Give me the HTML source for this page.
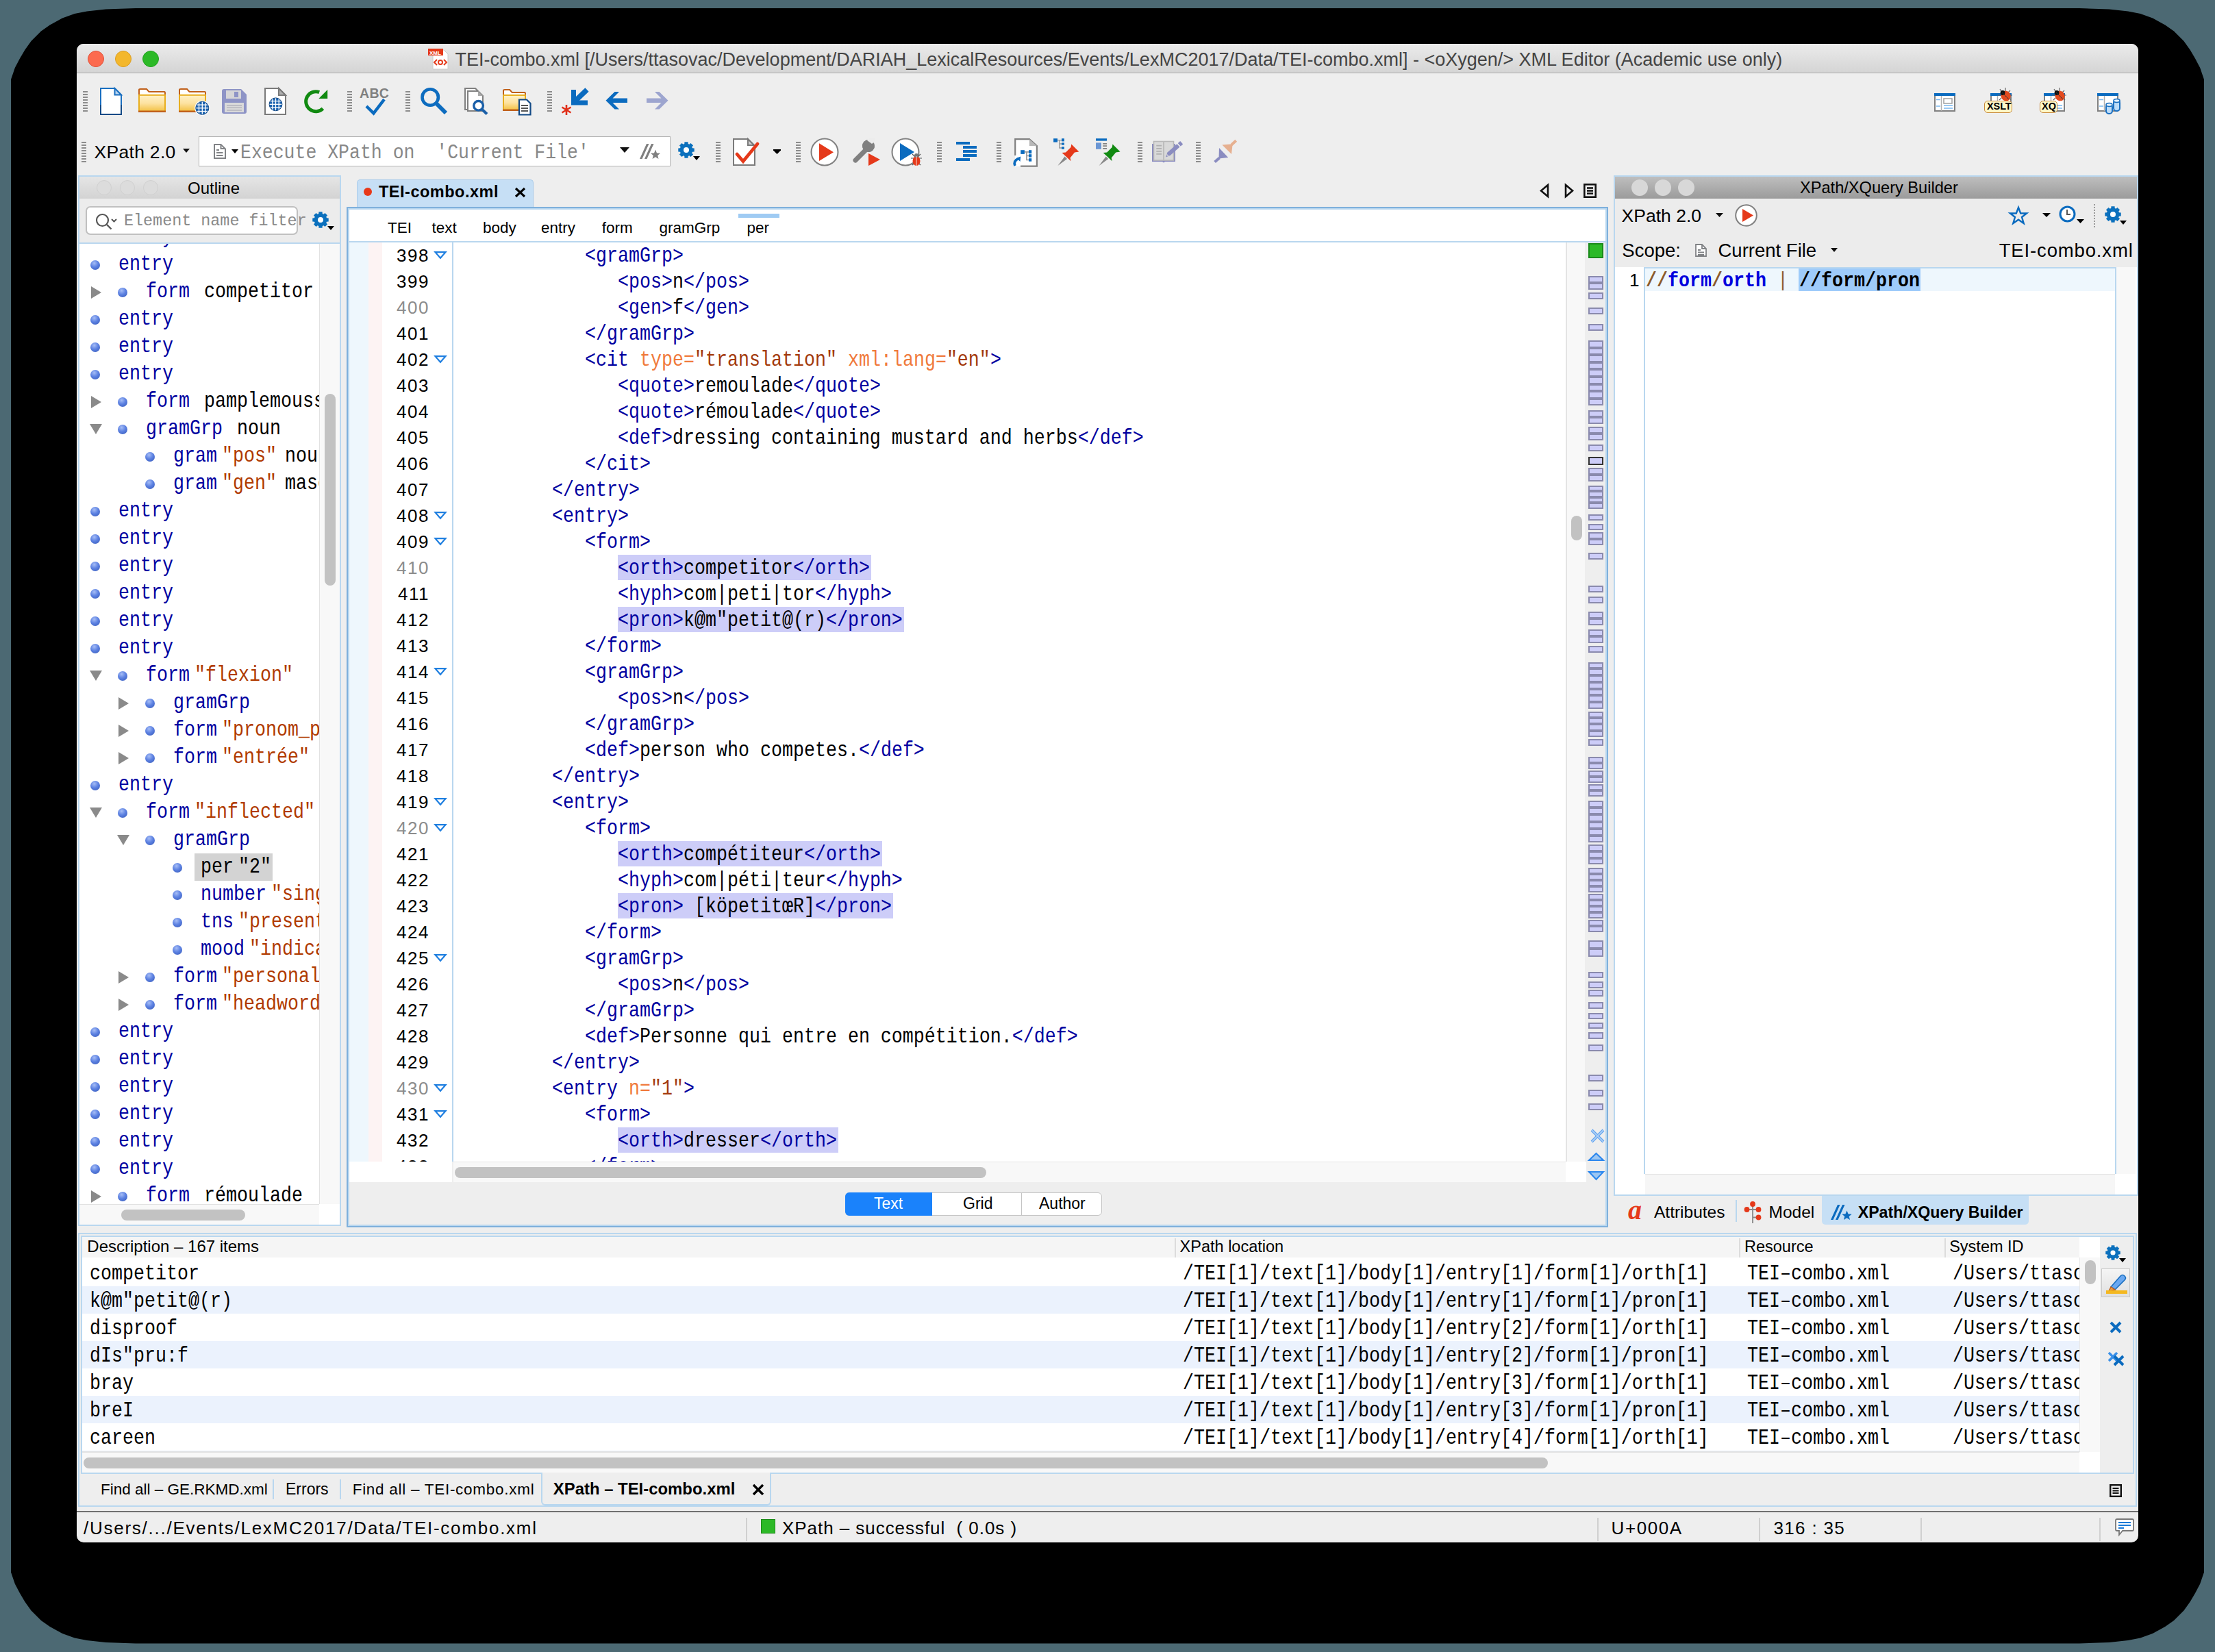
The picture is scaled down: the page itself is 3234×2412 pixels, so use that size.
<!DOCTYPE html><html><head><meta charset="utf-8"><style>
html,body{margin:0;padding:0}
body{width:3234px;height:2412px;background:#4c6973;position:relative;overflow:hidden;font-family:"Liberation Sans",sans-serif}
.a{position:absolute}
.ts{font-family:"Liberation Sans",sans-serif;white-space:pre;line-height:normal}
.tm{font-family:"Liberation Mono",monospace;white-space:pre;line-height:normal}
svg{position:absolute;overflow:visible}
.grip{position:absolute;width:7px;background:repeating-linear-gradient(#8c8c8c 0 2px,transparent 2px 4px)}
</style></head><body>
<svg style="left:0;top:0" width="3234" height="2412" viewBox="0 0 3234 2412"><path d="M16.0 116.0 L21.8 99.0 L28.9 85.5 L36.4 72.7 L45.5 60.0 L60.0 45.5 L72.8 36.4 L91.0 26.4 L109.0 20.0 L127.0 16.4 L154.5 13.6 L198.0 12.0 L3036.0 12.0 L3079.5 13.6 L3107.0 16.4 L3125.0 20.0 L3143.0 26.4 L3161.2 36.4 L3174.0 45.5 L3188.5 60.0 L3197.6 72.7 L3205.1 85.5 L3212.2 99.0 L3218.0 116.0 L3218.0 2295.5 L3212.2 2312.5 L3205.1 2326.0 L3197.6 2338.8 L3188.5 2351.5 L3174.0 2366.0 L3161.2 2375.1 L3143.0 2385.1 L3125.0 2391.5 L3107.0 2395.1 L3079.5 2397.9 L3036.0 2399.5 L198.0 2399.5 L154.5 2397.9 L127.0 2395.1 L109.0 2391.5 L91.0 2385.1 L72.8 2375.1 L60.0 2366.0 L45.5 2351.5 L36.4 2338.8 L28.9 2326.0 L21.8 2312.5 L16.0 2295.5Z" fill="#000"/></svg>
<div class="a" style="left:112px;top:64px;width:3010px;height:2188px;background:#eeeeee;border-radius:10px"></div>
<div class="a" style="left:112px;top:64px;width:3010px;height:43px;background:linear-gradient(#ebebeb,#d4d4d4);border-radius:10px 10px 0 0"></div>
<div class="a" style="left:112px;top:106px;width:3010px;height:1px;background:#a8a8a8"></div>
<div class="a" style="left:128px;top:74px;width:24px;height:24px;background:#fc6a4f;border-radius:50%;box-sizing:border-box;border:1px solid #e0533c"></div>
<div class="a" style="left:168px;top:74px;width:24px;height:24px;background:#f3b72c;border-radius:50%;box-sizing:border-box;border:1px solid #dc9d20"></div>
<div class="a" style="left:208px;top:74px;width:24px;height:24px;background:#2cb927;border-radius:50%;box-sizing:border-box;border:1px solid #22a21f"></div>
<div class="a ts" style="left:664.5px;top:72.36px;font-size:27px;color:#444;font-weight:normal;">TEI-combo.xml [/Users/ttasovac/Development/DARIAH_LexicalResources/Events/LexMC2017/Data/TEI-combo.xml] - &lt;oXygen/&gt; XML Editor (Academic use only)</div>
<div class="grip" style="left:121px;top:133px;height:30px"></div>
<div class="grip" style="left:507px;top:133px;height:30px"></div>
<div class="grip" style="left:592px;top:133px;height:30px"></div>
<div class="grip" style="left:799px;top:133px;height:30px"></div>
<div class="grip" style="left:119px;top:207px;height:30px"></div>
<div class="grip" style="left:1045px;top:207px;height:30px"></div>
<div class="grip" style="left:1162px;top:207px;height:30px"></div>
<div class="grip" style="left:1368px;top:207px;height:30px"></div>
<div class="grip" style="left:1455px;top:207px;height:30px"></div>
<div class="grip" style="left:1661px;top:207px;height:30px"></div>
<div class="grip" style="left:1746px;top:207px;height:30px"></div>
<div class="a ts" style="left:137.5px;top:206.62px;font-size:26.5px;color:#000;font-weight:normal;letter-spacing:0.3px">XPath 2.0</div>
<svg style="left:267px;top:217px;" width="10" height="6" viewBox="0 0 10 6"><path d="M0 0H10L5 6Z" fill="#111"/></svg>
<div class="a" style="left:290px;top:199px;width:689px;height:44px;background:#fff;box-sizing:border-box;border:1px solid #b4b4b4"></div>
<div class="a tm" style="left:351px;top:208.54px;font-size:26.5px;transform:scaleY(1.1);transform-origin:0 22.06px;"><span style="color:#888">Execute XPath on  'Current File'</span></div>
<svg style="left:905px;top:215px;" width="14" height="8" viewBox="0 0 14 8"><path d="M0 0H14L7 8Z" fill="#111"/></svg>
<div class="a" style="left:114px;top:256px;width:384px;height:1534px;box-sizing:border-box;border:2px solid #b9d7ef;background:#ececec"></div>
<div class="a" style="left:116px;top:258px;width:380px;height:32px;background:linear-gradient(#e5e5e5,#d3d3d3)"></div>
<div class="a" style="left:140.5px;top:263px;width:22px;height:22px;border-radius:50%;background:#dcdcdc;box-sizing:border-box;border:1px solid #d0d0d0"></div>
<div class="a" style="left:175px;top:263px;width:22px;height:22px;border-radius:50%;background:#dcdcdc;box-sizing:border-box;border:1px solid #d0d0d0"></div>
<div class="a" style="left:209px;top:263px;width:22px;height:22px;border-radius:50%;background:#dcdcdc;box-sizing:border-box;border:1px solid #d0d0d0"></div>
<div class="a ts" style="left:274px;top:260.78px;font-size:24px;color:#000;font-weight:normal;">Outline</div>
<div class="a" style="left:125px;top:301px;width:310px;height:42px;background:#fff;box-sizing:border-box;border:2px solid #c0c0c0;border-radius:7px"></div>
<div class="a tm" style="left:181px;top:310.32px;font-size:23.4px;color:#8a8a8a;font-weight:normal;">Element name filter</div>
<div class="a" style="left:116px;top:354px;width:380px;height:2px;background:#b9d7ef"></div>
<div class="a" style="left:116px;top:356px;width:350px;height:1402px;background:#fff"></div>
<div class="a" style="left:116px;top:356px;width:350px;height:1402px;overflow:hidden">
<div class="a" style="left:16px;top:24px;width:14px;height:14px;border-radius:50%;background:radial-gradient(circle at 40% 30%,#a6bdf6 0,#5d82e2 45%,#3558b8 100%)"></div>
<div class="a tm" style="left:57px;top:16.20px;font-size:26.67px;transform:scaleY(1.17);transform-origin:0 22.20px;"><span style="color:#0000a0">entry</span></div>
<svg style="left:16.5px;top:62px;" width="15" height="18" viewBox="0 0 15 18"><path d="M0 0L15 9L0 18Z" fill="#8a8a8a"/></svg>
<div class="a" style="left:56px;top:64px;width:14px;height:14px;border-radius:50%;background:radial-gradient(circle at 40% 30%,#a6bdf6 0,#5d82e2 45%,#3558b8 100%)"></div>
<div class="a tm" style="left:97px;top:56.20px;font-size:26.67px;transform:scaleY(1.17);transform-origin:0 22.20px;"><span style="color:#0000a0">form</span><span style="margin-left:21px"></span><span style="color:#000">competitor</span></div>
<div class="a" style="left:16px;top:104px;width:14px;height:14px;border-radius:50%;background:radial-gradient(circle at 40% 30%,#a6bdf6 0,#5d82e2 45%,#3558b8 100%)"></div>
<div class="a tm" style="left:57px;top:96.20px;font-size:26.67px;transform:scaleY(1.17);transform-origin:0 22.20px;"><span style="color:#0000a0">entry</span></div>
<div class="a" style="left:16px;top:144px;width:14px;height:14px;border-radius:50%;background:radial-gradient(circle at 40% 30%,#a6bdf6 0,#5d82e2 45%,#3558b8 100%)"></div>
<div class="a tm" style="left:57px;top:136.20px;font-size:26.67px;transform:scaleY(1.17);transform-origin:0 22.20px;"><span style="color:#0000a0">entry</span></div>
<div class="a" style="left:16px;top:184px;width:14px;height:14px;border-radius:50%;background:radial-gradient(circle at 40% 30%,#a6bdf6 0,#5d82e2 45%,#3558b8 100%)"></div>
<div class="a tm" style="left:57px;top:176.20px;font-size:26.67px;transform:scaleY(1.17);transform-origin:0 22.20px;"><span style="color:#0000a0">entry</span></div>
<svg style="left:16.5px;top:222px;" width="15" height="18" viewBox="0 0 15 18"><path d="M0 0L15 9L0 18Z" fill="#8a8a8a"/></svg>
<div class="a" style="left:56px;top:224px;width:14px;height:14px;border-radius:50%;background:radial-gradient(circle at 40% 30%,#a6bdf6 0,#5d82e2 45%,#3558b8 100%)"></div>
<div class="a tm" style="left:97px;top:216.20px;font-size:26.67px;transform:scaleY(1.17);transform-origin:0 22.20px;"><span style="color:#0000a0">form</span><span style="margin-left:21px"></span><span style="color:#000">pamplemousse</span></div>
<svg style="left:15px;top:263px;" width="18" height="15" viewBox="0 0 18 15"><path d="M0 0H18L9 15Z" fill="#8a8a8a"/></svg>
<div class="a" style="left:56px;top:264px;width:14px;height:14px;border-radius:50%;background:radial-gradient(circle at 40% 30%,#a6bdf6 0,#5d82e2 45%,#3558b8 100%)"></div>
<div class="a tm" style="left:97px;top:256.20px;font-size:26.67px;transform:scaleY(1.17);transform-origin:0 22.20px;"><span style="color:#0000a0">gramGrp</span><span style="margin-left:21px"></span><span style="color:#000">noun</span></div>
<div class="a" style="left:96px;top:304px;width:14px;height:14px;border-radius:50%;background:radial-gradient(circle at 40% 30%,#a6bdf6 0,#5d82e2 45%,#3558b8 100%)"></div>
<div class="a tm" style="left:137px;top:296.20px;font-size:26.67px;transform:scaleY(1.17);transform-origin:0 22.20px;"><span style="color:#0000a0">gram</span><span style="margin-left:7px"></span><span style="color:#b03a00">"pos"</span><span style="margin-left:12px"></span><span style="color:#000">noun</span></div>
<div class="a" style="left:96px;top:344px;width:14px;height:14px;border-radius:50%;background:radial-gradient(circle at 40% 30%,#a6bdf6 0,#5d82e2 45%,#3558b8 100%)"></div>
<div class="a tm" style="left:137px;top:336.20px;font-size:26.67px;transform:scaleY(1.17);transform-origin:0 22.20px;"><span style="color:#0000a0">gram</span><span style="margin-left:7px"></span><span style="color:#b03a00">"gen"</span><span style="margin-left:12px"></span><span style="color:#000">masc</span></div>
<div class="a" style="left:16px;top:384px;width:14px;height:14px;border-radius:50%;background:radial-gradient(circle at 40% 30%,#a6bdf6 0,#5d82e2 45%,#3558b8 100%)"></div>
<div class="a tm" style="left:57px;top:376.20px;font-size:26.67px;transform:scaleY(1.17);transform-origin:0 22.20px;"><span style="color:#0000a0">entry</span></div>
<div class="a" style="left:16px;top:424px;width:14px;height:14px;border-radius:50%;background:radial-gradient(circle at 40% 30%,#a6bdf6 0,#5d82e2 45%,#3558b8 100%)"></div>
<div class="a tm" style="left:57px;top:416.20px;font-size:26.67px;transform:scaleY(1.17);transform-origin:0 22.20px;"><span style="color:#0000a0">entry</span></div>
<div class="a" style="left:16px;top:464px;width:14px;height:14px;border-radius:50%;background:radial-gradient(circle at 40% 30%,#a6bdf6 0,#5d82e2 45%,#3558b8 100%)"></div>
<div class="a tm" style="left:57px;top:456.20px;font-size:26.67px;transform:scaleY(1.17);transform-origin:0 22.20px;"><span style="color:#0000a0">entry</span></div>
<div class="a" style="left:16px;top:504px;width:14px;height:14px;border-radius:50%;background:radial-gradient(circle at 40% 30%,#a6bdf6 0,#5d82e2 45%,#3558b8 100%)"></div>
<div class="a tm" style="left:57px;top:496.20px;font-size:26.67px;transform:scaleY(1.17);transform-origin:0 22.20px;"><span style="color:#0000a0">entry</span></div>
<div class="a" style="left:16px;top:544px;width:14px;height:14px;border-radius:50%;background:radial-gradient(circle at 40% 30%,#a6bdf6 0,#5d82e2 45%,#3558b8 100%)"></div>
<div class="a tm" style="left:57px;top:536.20px;font-size:26.67px;transform:scaleY(1.17);transform-origin:0 22.20px;"><span style="color:#0000a0">entry</span></div>
<div class="a" style="left:16px;top:584px;width:14px;height:14px;border-radius:50%;background:radial-gradient(circle at 40% 30%,#a6bdf6 0,#5d82e2 45%,#3558b8 100%)"></div>
<div class="a tm" style="left:57px;top:576.20px;font-size:26.67px;transform:scaleY(1.17);transform-origin:0 22.20px;"><span style="color:#0000a0">entry</span></div>
<svg style="left:15px;top:623px;" width="18" height="15" viewBox="0 0 18 15"><path d="M0 0H18L9 15Z" fill="#8a8a8a"/></svg>
<div class="a" style="left:56px;top:624px;width:14px;height:14px;border-radius:50%;background:radial-gradient(circle at 40% 30%,#a6bdf6 0,#5d82e2 45%,#3558b8 100%)"></div>
<div class="a tm" style="left:97px;top:616.20px;font-size:26.67px;transform:scaleY(1.17);transform-origin:0 22.20px;"><span style="color:#0000a0">form</span><span style="margin-left:7px"></span><span style="color:#b03a00">"flexion"</span></div>
<svg style="left:56.5px;top:662px;" width="15" height="18" viewBox="0 0 15 18"><path d="M0 0L15 9L0 18Z" fill="#8a8a8a"/></svg>
<div class="a" style="left:96px;top:664px;width:14px;height:14px;border-radius:50%;background:radial-gradient(circle at 40% 30%,#a6bdf6 0,#5d82e2 45%,#3558b8 100%)"></div>
<div class="a tm" style="left:137px;top:656.20px;font-size:26.67px;transform:scaleY(1.17);transform-origin:0 22.20px;"><span style="color:#0000a0">gramGrp</span></div>
<svg style="left:56.5px;top:702px;" width="15" height="18" viewBox="0 0 15 18"><path d="M0 0L15 9L0 18Z" fill="#8a8a8a"/></svg>
<div class="a" style="left:96px;top:704px;width:14px;height:14px;border-radius:50%;background:radial-gradient(circle at 40% 30%,#a6bdf6 0,#5d82e2 45%,#3558b8 100%)"></div>
<div class="a tm" style="left:137px;top:696.20px;font-size:26.67px;transform:scaleY(1.17);transform-origin:0 22.20px;"><span style="color:#0000a0">form</span><span style="margin-left:7px"></span><span style="color:#b03a00">"pronom_pers"</span></div>
<svg style="left:56.5px;top:742px;" width="15" height="18" viewBox="0 0 15 18"><path d="M0 0L15 9L0 18Z" fill="#8a8a8a"/></svg>
<div class="a" style="left:96px;top:744px;width:14px;height:14px;border-radius:50%;background:radial-gradient(circle at 40% 30%,#a6bdf6 0,#5d82e2 45%,#3558b8 100%)"></div>
<div class="a tm" style="left:137px;top:736.20px;font-size:26.67px;transform:scaleY(1.17);transform-origin:0 22.20px;"><span style="color:#0000a0">form</span><span style="margin-left:7px"></span><span style="color:#b03a00">"entrée"</span></div>
<div class="a" style="left:16px;top:784px;width:14px;height:14px;border-radius:50%;background:radial-gradient(circle at 40% 30%,#a6bdf6 0,#5d82e2 45%,#3558b8 100%)"></div>
<div class="a tm" style="left:57px;top:776.20px;font-size:26.67px;transform:scaleY(1.17);transform-origin:0 22.20px;"><span style="color:#0000a0">entry</span></div>
<svg style="left:15px;top:823px;" width="18" height="15" viewBox="0 0 18 15"><path d="M0 0H18L9 15Z" fill="#8a8a8a"/></svg>
<div class="a" style="left:56px;top:824px;width:14px;height:14px;border-radius:50%;background:radial-gradient(circle at 40% 30%,#a6bdf6 0,#5d82e2 45%,#3558b8 100%)"></div>
<div class="a tm" style="left:97px;top:816.20px;font-size:26.67px;transform:scaleY(1.17);transform-origin:0 22.20px;"><span style="color:#0000a0">form</span><span style="margin-left:7px"></span><span style="color:#b03a00">"inflected"</span></div>
<svg style="left:55px;top:863px;" width="18" height="15" viewBox="0 0 18 15"><path d="M0 0H18L9 15Z" fill="#8a8a8a"/></svg>
<div class="a" style="left:96px;top:864px;width:14px;height:14px;border-radius:50%;background:radial-gradient(circle at 40% 30%,#a6bdf6 0,#5d82e2 45%,#3558b8 100%)"></div>
<div class="a tm" style="left:137px;top:856.20px;font-size:26.67px;transform:scaleY(1.17);transform-origin:0 22.20px;"><span style="color:#0000a0">gramGrp</span></div>
<div class="a" style="left:136px;top:904px;width:14px;height:14px;border-radius:50%;background:radial-gradient(circle at 40% 30%,#a6bdf6 0,#5d82e2 45%,#3558b8 100%)"></div>
<div class="a" style="left:168px;top:890px;width:114px;height:40px;background:#d3d3d3"></div>
<div class="a tm" style="left:177px;top:896.20px;font-size:26.67px;transform:scaleY(1.17);transform-origin:0 22.20px;"><span style="color:#000">per</span><span style="margin-left:7px"></span><span style="color:#000">"2"</span></div>
<div class="a" style="left:136px;top:944px;width:14px;height:14px;border-radius:50%;background:radial-gradient(circle at 40% 30%,#a6bdf6 0,#5d82e2 45%,#3558b8 100%)"></div>
<div class="a tm" style="left:177px;top:936.20px;font-size:26.67px;transform:scaleY(1.17);transform-origin:0 22.20px;"><span style="color:#0000a0">number</span><span style="margin-left:7px"></span><span style="color:#b03a00">"singular"</span></div>
<div class="a" style="left:136px;top:984px;width:14px;height:14px;border-radius:50%;background:radial-gradient(circle at 40% 30%,#a6bdf6 0,#5d82e2 45%,#3558b8 100%)"></div>
<div class="a tm" style="left:177px;top:976.20px;font-size:26.67px;transform:scaleY(1.17);transform-origin:0 22.20px;"><span style="color:#0000a0">tns</span><span style="margin-left:7px"></span><span style="color:#b03a00">"present"</span></div>
<div class="a" style="left:136px;top:1024px;width:14px;height:14px;border-radius:50%;background:radial-gradient(circle at 40% 30%,#a6bdf6 0,#5d82e2 45%,#3558b8 100%)"></div>
<div class="a tm" style="left:177px;top:1016.20px;font-size:26.67px;transform:scaleY(1.17);transform-origin:0 22.20px;"><span style="color:#0000a0">mood</span><span style="margin-left:7px"></span><span style="color:#b03a00">"indicative"</span></div>
<svg style="left:56.5px;top:1062px;" width="15" height="18" viewBox="0 0 15 18"><path d="M0 0L15 9L0 18Z" fill="#8a8a8a"/></svg>
<div class="a" style="left:96px;top:1064px;width:14px;height:14px;border-radius:50%;background:radial-gradient(circle at 40% 30%,#a6bdf6 0,#5d82e2 45%,#3558b8 100%)"></div>
<div class="a tm" style="left:137px;top:1056.20px;font-size:26.67px;transform:scaleY(1.17);transform-origin:0 22.20px;"><span style="color:#0000a0">form</span><span style="margin-left:7px"></span><span style="color:#b03a00">"personal"</span></div>
<svg style="left:56.5px;top:1102px;" width="15" height="18" viewBox="0 0 15 18"><path d="M0 0L15 9L0 18Z" fill="#8a8a8a"/></svg>
<div class="a" style="left:96px;top:1104px;width:14px;height:14px;border-radius:50%;background:radial-gradient(circle at 40% 30%,#a6bdf6 0,#5d82e2 45%,#3558b8 100%)"></div>
<div class="a tm" style="left:137px;top:1096.20px;font-size:26.67px;transform:scaleY(1.17);transform-origin:0 22.20px;"><span style="color:#0000a0">form</span><span style="margin-left:7px"></span><span style="color:#b03a00">"headword"</span></div>
<div class="a" style="left:16px;top:1144px;width:14px;height:14px;border-radius:50%;background:radial-gradient(circle at 40% 30%,#a6bdf6 0,#5d82e2 45%,#3558b8 100%)"></div>
<div class="a tm" style="left:57px;top:1136.20px;font-size:26.67px;transform:scaleY(1.17);transform-origin:0 22.20px;"><span style="color:#0000a0">entry</span></div>
<div class="a" style="left:16px;top:1184px;width:14px;height:14px;border-radius:50%;background:radial-gradient(circle at 40% 30%,#a6bdf6 0,#5d82e2 45%,#3558b8 100%)"></div>
<div class="a tm" style="left:57px;top:1176.20px;font-size:26.67px;transform:scaleY(1.17);transform-origin:0 22.20px;"><span style="color:#0000a0">entry</span></div>
<div class="a" style="left:16px;top:1224px;width:14px;height:14px;border-radius:50%;background:radial-gradient(circle at 40% 30%,#a6bdf6 0,#5d82e2 45%,#3558b8 100%)"></div>
<div class="a tm" style="left:57px;top:1216.20px;font-size:26.67px;transform:scaleY(1.17);transform-origin:0 22.20px;"><span style="color:#0000a0">entry</span></div>
<div class="a" style="left:16px;top:1264px;width:14px;height:14px;border-radius:50%;background:radial-gradient(circle at 40% 30%,#a6bdf6 0,#5d82e2 45%,#3558b8 100%)"></div>
<div class="a tm" style="left:57px;top:1256.20px;font-size:26.67px;transform:scaleY(1.17);transform-origin:0 22.20px;"><span style="color:#0000a0">entry</span></div>
<div class="a" style="left:16px;top:1304px;width:14px;height:14px;border-radius:50%;background:radial-gradient(circle at 40% 30%,#a6bdf6 0,#5d82e2 45%,#3558b8 100%)"></div>
<div class="a tm" style="left:57px;top:1296.20px;font-size:26.67px;transform:scaleY(1.17);transform-origin:0 22.20px;"><span style="color:#0000a0">entry</span></div>
<div class="a" style="left:16px;top:1344px;width:14px;height:14px;border-radius:50%;background:radial-gradient(circle at 40% 30%,#a6bdf6 0,#5d82e2 45%,#3558b8 100%)"></div>
<div class="a tm" style="left:57px;top:1336.20px;font-size:26.67px;transform:scaleY(1.17);transform-origin:0 22.20px;"><span style="color:#0000a0">entry</span></div>
<svg style="left:16.5px;top:1382px;" width="15" height="18" viewBox="0 0 15 18"><path d="M0 0L15 9L0 18Z" fill="#8a8a8a"/></svg>
<div class="a" style="left:56px;top:1384px;width:14px;height:14px;border-radius:50%;background:radial-gradient(circle at 40% 30%,#a6bdf6 0,#5d82e2 45%,#3558b8 100%)"></div>
<div class="a tm" style="left:97px;top:1376.20px;font-size:26.67px;transform:scaleY(1.17);transform-origin:0 22.20px;"><span style="color:#0000a0">form</span><span style="margin-left:21px"></span><span style="color:#000">rémoulade</span></div>
<div class="a tm" style="left:57px;top:-23.80px;font-size:26.67px;transform:scaleY(1.17);transform-origin:0 22.20px;"><span style="color:#0000a0">entry</span></div>
</div>
<div class="a" style="left:466px;top:356px;width:30px;height:1402px;background:#f8f8f8;box-sizing:border-box;border-left:1px solid #e2e2e2"></div>
<div class="a" style="left:474px;top:575px;width:16px;height:280px;background:#c2c2c2;border-radius:8px"></div>
<div class="a" style="left:116px;top:1758px;width:350px;height:30px;background:#f8f8f8;box-sizing:border-box;border-top:1px solid #e2e2e2"></div>
<div class="a" style="left:177px;top:1766px;width:181px;height:16px;background:#c2c2c2;border-radius:8px"></div>
<div class="a" style="left:466px;top:1758px;width:30px;height:30px;background:#fff"></div>
<div class="a" style="left:521px;top:262px;width:258px;height:42px;background:#c6dff5;box-sizing:border-box;border:1px solid #aacbea;border-bottom:none;border-radius:5px 5px 0 0"></div>
<div class="a" style="left:531px;top:274px;width:12px;height:12px;background:#e8391a;border-radius:50%"></div>
<div class="a ts" style="left:553px;top:267.33px;font-size:23.5px;color:#000;font-weight:bold;letter-spacing:0.5px">TEI-combo.xml</div>
<svg style="left:751px;top:273px;" width="17" height="16" viewBox="0 0 17 16"><path d="M2 2L15 14M15 2L2 14" stroke="#000" stroke-width="3.2"/></svg>
<div class="a" style="left:506px;top:302px;width:1842px;height:1490px;box-sizing:border-box;border:2px solid #7fb0dc;background:#eeeeee"></div>
<div class="a" style="left:508px;top:304px;width:1838px;height:1486px;box-sizing:border-box;border:2px solid #b9d7ef"></div>
<div class="a" style="left:510px;top:306px;width:1834px;height:46px;background:#fff"></div>
<div class="a" style="left:510px;top:352px;width:1834px;height:2px;background:#b9d7ef"></div>
<div class="a" style="left:510px;top:354px;width:28px;height:1342px;background:#eef7fd"></div>
<div class="a" style="left:538px;top:354px;width:20px;height:1342px;background:#fdf3f3"></div>
<div class="a" style="left:558px;top:354px;width:102px;height:1342px;background:#fff"></div>
<div class="a" style="left:660px;top:354px;width:2px;height:1342px;background:#b9d7ef"></div>
<div class="a" style="left:662px;top:354px;width:1624px;height:1342px;background:#fff"></div>
<div class="a" style="left:2286px;top:354px;width:28px;height:1342px;background:#f8f8f8;box-sizing:border-box;border-left:2px solid #e4e4e4"></div>
<div class="a" style="left:2294px;top:753px;width:16px;height:36px;background:#c2c2c2;border-radius:8px"></div>
<div class="a" style="left:2314px;top:354px;width:30px;height:1372px;background:#eeeeee"></div>
<div class="a" style="left:510px;top:1696px;width:150px;height:30px;background:#fff"></div>
<div class="a" style="left:662px;top:1696px;width:1624px;height:30px;background:#f8f8f8;box-sizing:border-box;border-top:1px solid #e4e4e4"></div>
<div class="a" style="left:664px;top:1704px;width:776px;height:16px;background:#c2c2c2;border-radius:8px"></div>
<div class="a" style="left:2286px;top:1696px;width:30px;height:30px;background:#fff"></div>
<div class="a" style="left:510px;top:354px;width:1776px;height:1342px;overflow:hidden">
<div class="a tm" style="left:152px;top:5.80px;font-size:26.67px;transform:scaleY(1.17);transform-origin:0 22.20px;"><span style="color:#000">            </span><span style="color:#0000a0">&lt;gramGrp&gt;</span></div>
<div class="a ts" style="left:52px;top:4.47px;width:65px;text-align:right;font-size:26px;letter-spacing:1.5px;color:#000">398</div>
<svg style="left:124px;top:13px;" width="18" height="11" viewBox="0 0 18 11"><path d="M1.5 1.2H16.5L9 9.8Z" fill="none" stroke="#1f7fe0" stroke-width="2.2" stroke-linejoin="miter"/></svg>
<div class="a tm" style="left:152px;top:43.80px;font-size:26.67px;transform:scaleY(1.17);transform-origin:0 22.20px;"><span style="color:#000">               </span><span style="color:#0000a0">&lt;pos&gt;</span><span style="color:#000">n</span><span style="color:#0000a0">&lt;/pos&gt;</span></div>
<div class="a ts" style="left:52px;top:42.47px;width:65px;text-align:right;font-size:26px;letter-spacing:1.5px;color:#000">399</div>
<div class="a tm" style="left:152px;top:81.80px;font-size:26.67px;transform:scaleY(1.17);transform-origin:0 22.20px;"><span style="color:#000">               </span><span style="color:#0000a0">&lt;gen&gt;</span><span style="color:#000">f</span><span style="color:#0000a0">&lt;/gen&gt;</span></div>
<div class="a ts" style="left:52px;top:80.47px;width:65px;text-align:right;font-size:26px;letter-spacing:1.5px;color:#8c8c8c">400</div>
<div class="a tm" style="left:152px;top:119.80px;font-size:26.67px;transform:scaleY(1.17);transform-origin:0 22.20px;"><span style="color:#000">            </span><span style="color:#0000a0">&lt;/gramGrp&gt;</span></div>
<div class="a ts" style="left:52px;top:118.47px;width:65px;text-align:right;font-size:26px;letter-spacing:1.5px;color:#000">401</div>
<div class="a tm" style="left:152px;top:157.80px;font-size:26.67px;transform:scaleY(1.17);transform-origin:0 22.20px;"><span style="color:#000">            </span><span style="color:#0000a0">&lt;cit</span><span style="color:#0000a0"> </span><span style="color:#f07a3c">type=</span><span style="color:#a33a0c">"translation"</span><span style="color:#0000a0"></span><span style="color:#0000a0"> </span><span style="color:#f07a3c">xml:lang=</span><span style="color:#a33a0c">"en"</span><span style="color:#0000a0">&gt;</span></div>
<div class="a ts" style="left:52px;top:156.47px;width:65px;text-align:right;font-size:26px;letter-spacing:1.5px;color:#000">402</div>
<svg style="left:124px;top:165px;" width="18" height="11" viewBox="0 0 18 11"><path d="M1.5 1.2H16.5L9 9.8Z" fill="none" stroke="#1f7fe0" stroke-width="2.2" stroke-linejoin="miter"/></svg>
<div class="a tm" style="left:152px;top:195.80px;font-size:26.67px;transform:scaleY(1.17);transform-origin:0 22.20px;"><span style="color:#000">               </span><span style="color:#0000a0">&lt;quote&gt;</span><span style="color:#000">remoulade</span><span style="color:#0000a0">&lt;/quote&gt;</span></div>
<div class="a ts" style="left:52px;top:194.47px;width:65px;text-align:right;font-size:26px;letter-spacing:1.5px;color:#000">403</div>
<div class="a tm" style="left:152px;top:233.80px;font-size:26.67px;transform:scaleY(1.17);transform-origin:0 22.20px;"><span style="color:#000">               </span><span style="color:#0000a0">&lt;quote&gt;</span><span style="color:#000">rémoulade</span><span style="color:#0000a0">&lt;/quote&gt;</span></div>
<div class="a ts" style="left:52px;top:232.47px;width:65px;text-align:right;font-size:26px;letter-spacing:1.5px;color:#000">404</div>
<div class="a tm" style="left:152px;top:271.80px;font-size:26.67px;transform:scaleY(1.17);transform-origin:0 22.20px;"><span style="color:#000">               </span><span style="color:#0000a0">&lt;def&gt;</span><span style="color:#000">dressing containing mustard and herbs</span><span style="color:#0000a0">&lt;/def&gt;</span></div>
<div class="a ts" style="left:52px;top:270.47px;width:65px;text-align:right;font-size:26px;letter-spacing:1.5px;color:#000">405</div>
<div class="a tm" style="left:152px;top:309.80px;font-size:26.67px;transform:scaleY(1.17);transform-origin:0 22.20px;"><span style="color:#000">            </span><span style="color:#0000a0">&lt;/cit&gt;</span></div>
<div class="a ts" style="left:52px;top:308.47px;width:65px;text-align:right;font-size:26px;letter-spacing:1.5px;color:#000">406</div>
<div class="a tm" style="left:152px;top:347.80px;font-size:26.67px;transform:scaleY(1.17);transform-origin:0 22.20px;"><span style="color:#000">         </span><span style="color:#0000a0">&lt;/entry&gt;</span></div>
<div class="a ts" style="left:52px;top:346.47px;width:65px;text-align:right;font-size:26px;letter-spacing:1.5px;color:#000">407</div>
<div class="a tm" style="left:152px;top:385.80px;font-size:26.67px;transform:scaleY(1.17);transform-origin:0 22.20px;"><span style="color:#000">         </span><span style="color:#0000a0">&lt;entry&gt;</span></div>
<div class="a ts" style="left:52px;top:384.47px;width:65px;text-align:right;font-size:26px;letter-spacing:1.5px;color:#000">408</div>
<svg style="left:124px;top:393px;" width="18" height="11" viewBox="0 0 18 11"><path d="M1.5 1.2H16.5L9 9.8Z" fill="none" stroke="#1f7fe0" stroke-width="2.2" stroke-linejoin="miter"/></svg>
<div class="a tm" style="left:152px;top:423.80px;font-size:26.67px;transform:scaleY(1.17);transform-origin:0 22.20px;"><span style="color:#000">            </span><span style="color:#0000a0">&lt;form&gt;</span></div>
<div class="a ts" style="left:52px;top:422.47px;width:65px;text-align:right;font-size:26px;letter-spacing:1.5px;color:#000">409</div>
<svg style="left:124px;top:431px;" width="18" height="11" viewBox="0 0 18 11"><path d="M1.5 1.2H16.5L9 9.8Z" fill="none" stroke="#1f7fe0" stroke-width="2.2" stroke-linejoin="miter"/></svg>
<div class="a" style="left:392px;top:456px;width:370px;height:37px;background:#cdcdf8"></div>
<div class="a tm" style="left:152px;top:461.80px;font-size:26.67px;transform:scaleY(1.17);transform-origin:0 22.20px;"><span style="color:#000">               </span><span style="color:#0000a0">&lt;orth&gt;</span><span style="color:#000">competitor</span><span style="color:#0000a0">&lt;/orth&gt;</span></div>
<div class="a ts" style="left:52px;top:460.47px;width:65px;text-align:right;font-size:26px;letter-spacing:1.5px;color:#8c8c8c">410</div>
<div class="a tm" style="left:152px;top:499.80px;font-size:26.67px;transform:scaleY(1.17);transform-origin:0 22.20px;"><span style="color:#000">               </span><span style="color:#0000a0">&lt;hyph&gt;</span><span style="color:#000">com|peti|tor</span><span style="color:#0000a0">&lt;/hyph&gt;</span></div>
<div class="a ts" style="left:52px;top:498.47px;width:65px;text-align:right;font-size:26px;letter-spacing:1.5px;color:#000">411</div>
<div class="a" style="left:392px;top:532px;width:418px;height:37px;background:#cdcdf8"></div>
<div class="a tm" style="left:152px;top:537.80px;font-size:26.67px;transform:scaleY(1.17);transform-origin:0 22.20px;"><span style="color:#000">               </span><span style="color:#0000a0">&lt;pron&gt;</span><span style="color:#000">k@m"petit@(r)</span><span style="color:#0000a0">&lt;/pron&gt;</span></div>
<div class="a ts" style="left:52px;top:536.47px;width:65px;text-align:right;font-size:26px;letter-spacing:1.5px;color:#000">412</div>
<div class="a tm" style="left:152px;top:575.80px;font-size:26.67px;transform:scaleY(1.17);transform-origin:0 22.20px;"><span style="color:#000">            </span><span style="color:#0000a0">&lt;/form&gt;</span></div>
<div class="a ts" style="left:52px;top:574.47px;width:65px;text-align:right;font-size:26px;letter-spacing:1.5px;color:#000">413</div>
<div class="a tm" style="left:152px;top:613.80px;font-size:26.67px;transform:scaleY(1.17);transform-origin:0 22.20px;"><span style="color:#000">            </span><span style="color:#0000a0">&lt;gramGrp&gt;</span></div>
<div class="a ts" style="left:52px;top:612.47px;width:65px;text-align:right;font-size:26px;letter-spacing:1.5px;color:#000">414</div>
<svg style="left:124px;top:621px;" width="18" height="11" viewBox="0 0 18 11"><path d="M1.5 1.2H16.5L9 9.8Z" fill="none" stroke="#1f7fe0" stroke-width="2.2" stroke-linejoin="miter"/></svg>
<div class="a tm" style="left:152px;top:651.80px;font-size:26.67px;transform:scaleY(1.17);transform-origin:0 22.20px;"><span style="color:#000">               </span><span style="color:#0000a0">&lt;pos&gt;</span><span style="color:#000">n</span><span style="color:#0000a0">&lt;/pos&gt;</span></div>
<div class="a ts" style="left:52px;top:650.47px;width:65px;text-align:right;font-size:26px;letter-spacing:1.5px;color:#000">415</div>
<div class="a tm" style="left:152px;top:689.80px;font-size:26.67px;transform:scaleY(1.17);transform-origin:0 22.20px;"><span style="color:#000">            </span><span style="color:#0000a0">&lt;/gramGrp&gt;</span></div>
<div class="a ts" style="left:52px;top:688.47px;width:65px;text-align:right;font-size:26px;letter-spacing:1.5px;color:#000">416</div>
<div class="a tm" style="left:152px;top:727.80px;font-size:26.67px;transform:scaleY(1.17);transform-origin:0 22.20px;"><span style="color:#000">            </span><span style="color:#0000a0">&lt;def&gt;</span><span style="color:#000">person who competes.</span><span style="color:#0000a0">&lt;/def&gt;</span></div>
<div class="a ts" style="left:52px;top:726.47px;width:65px;text-align:right;font-size:26px;letter-spacing:1.5px;color:#000">417</div>
<div class="a tm" style="left:152px;top:765.80px;font-size:26.67px;transform:scaleY(1.17);transform-origin:0 22.20px;"><span style="color:#000">         </span><span style="color:#0000a0">&lt;/entry&gt;</span></div>
<div class="a ts" style="left:52px;top:764.47px;width:65px;text-align:right;font-size:26px;letter-spacing:1.5px;color:#000">418</div>
<div class="a tm" style="left:152px;top:803.80px;font-size:26.67px;transform:scaleY(1.17);transform-origin:0 22.20px;"><span style="color:#000">         </span><span style="color:#0000a0">&lt;entry&gt;</span></div>
<div class="a ts" style="left:52px;top:802.47px;width:65px;text-align:right;font-size:26px;letter-spacing:1.5px;color:#000">419</div>
<svg style="left:124px;top:811px;" width="18" height="11" viewBox="0 0 18 11"><path d="M1.5 1.2H16.5L9 9.8Z" fill="none" stroke="#1f7fe0" stroke-width="2.2" stroke-linejoin="miter"/></svg>
<div class="a tm" style="left:152px;top:841.80px;font-size:26.67px;transform:scaleY(1.17);transform-origin:0 22.20px;"><span style="color:#000">            </span><span style="color:#0000a0">&lt;form&gt;</span></div>
<div class="a ts" style="left:52px;top:840.47px;width:65px;text-align:right;font-size:26px;letter-spacing:1.5px;color:#8c8c8c">420</div>
<svg style="left:124px;top:849px;" width="18" height="11" viewBox="0 0 18 11"><path d="M1.5 1.2H16.5L9 9.8Z" fill="none" stroke="#1f7fe0" stroke-width="2.2" stroke-linejoin="miter"/></svg>
<div class="a" style="left:392px;top:874px;width:386px;height:37px;background:#cdcdf8"></div>
<div class="a tm" style="left:152px;top:879.80px;font-size:26.67px;transform:scaleY(1.17);transform-origin:0 22.20px;"><span style="color:#000">               </span><span style="color:#0000a0">&lt;orth&gt;</span><span style="color:#000">compétiteur</span><span style="color:#0000a0">&lt;/orth&gt;</span></div>
<div class="a ts" style="left:52px;top:878.47px;width:65px;text-align:right;font-size:26px;letter-spacing:1.5px;color:#000">421</div>
<div class="a tm" style="left:152px;top:917.80px;font-size:26.67px;transform:scaleY(1.17);transform-origin:0 22.20px;"><span style="color:#000">               </span><span style="color:#0000a0">&lt;hyph&gt;</span><span style="color:#000">com|péti|teur</span><span style="color:#0000a0">&lt;/hyph&gt;</span></div>
<div class="a ts" style="left:52px;top:916.47px;width:65px;text-align:right;font-size:26px;letter-spacing:1.5px;color:#000">422</div>
<div class="a" style="left:392px;top:950px;width:402px;height:37px;background:#cdcdf8"></div>
<div class="a tm" style="left:152px;top:955.80px;font-size:26.67px;transform:scaleY(1.17);transform-origin:0 22.20px;"><span style="color:#000">               </span><span style="color:#0000a0">&lt;pron&gt;</span><span style="color:#000"> [köpetitœR]</span><span style="color:#0000a0">&lt;/pron&gt;</span></div>
<div class="a ts" style="left:52px;top:954.47px;width:65px;text-align:right;font-size:26px;letter-spacing:1.5px;color:#000">423</div>
<div class="a tm" style="left:152px;top:993.80px;font-size:26.67px;transform:scaleY(1.17);transform-origin:0 22.20px;"><span style="color:#000">            </span><span style="color:#0000a0">&lt;/form&gt;</span></div>
<div class="a ts" style="left:52px;top:992.47px;width:65px;text-align:right;font-size:26px;letter-spacing:1.5px;color:#000">424</div>
<div class="a tm" style="left:152px;top:1031.80px;font-size:26.67px;transform:scaleY(1.17);transform-origin:0 22.20px;"><span style="color:#000">            </span><span style="color:#0000a0">&lt;gramGrp&gt;</span></div>
<div class="a ts" style="left:52px;top:1030.47px;width:65px;text-align:right;font-size:26px;letter-spacing:1.5px;color:#000">425</div>
<svg style="left:124px;top:1039px;" width="18" height="11" viewBox="0 0 18 11"><path d="M1.5 1.2H16.5L9 9.8Z" fill="none" stroke="#1f7fe0" stroke-width="2.2" stroke-linejoin="miter"/></svg>
<div class="a tm" style="left:152px;top:1069.80px;font-size:26.67px;transform:scaleY(1.17);transform-origin:0 22.20px;"><span style="color:#000">               </span><span style="color:#0000a0">&lt;pos&gt;</span><span style="color:#000">n</span><span style="color:#0000a0">&lt;/pos&gt;</span></div>
<div class="a ts" style="left:52px;top:1068.47px;width:65px;text-align:right;font-size:26px;letter-spacing:1.5px;color:#000">426</div>
<div class="a tm" style="left:152px;top:1107.80px;font-size:26.67px;transform:scaleY(1.17);transform-origin:0 22.20px;"><span style="color:#000">            </span><span style="color:#0000a0">&lt;/gramGrp&gt;</span></div>
<div class="a ts" style="left:52px;top:1106.47px;width:65px;text-align:right;font-size:26px;letter-spacing:1.5px;color:#000">427</div>
<div class="a tm" style="left:152px;top:1145.80px;font-size:26.67px;transform:scaleY(1.17);transform-origin:0 22.20px;"><span style="color:#000">            </span><span style="color:#0000a0">&lt;def&gt;</span><span style="color:#000">Personne qui entre en compétition.</span><span style="color:#0000a0">&lt;/def&gt;</span></div>
<div class="a ts" style="left:52px;top:1144.47px;width:65px;text-align:right;font-size:26px;letter-spacing:1.5px;color:#000">428</div>
<div class="a tm" style="left:152px;top:1183.80px;font-size:26.67px;transform:scaleY(1.17);transform-origin:0 22.20px;"><span style="color:#000">         </span><span style="color:#0000a0">&lt;/entry&gt;</span></div>
<div class="a ts" style="left:52px;top:1182.47px;width:65px;text-align:right;font-size:26px;letter-spacing:1.5px;color:#000">429</div>
<div class="a tm" style="left:152px;top:1221.80px;font-size:26.67px;transform:scaleY(1.17);transform-origin:0 22.20px;"><span style="color:#000">         </span><span style="color:#0000a0">&lt;entry</span><span style="color:#0000a0"> </span><span style="color:#f07a3c">n=</span><span style="color:#a33a0c">"1"</span><span style="color:#0000a0">&gt;</span></div>
<div class="a ts" style="left:52px;top:1220.47px;width:65px;text-align:right;font-size:26px;letter-spacing:1.5px;color:#8c8c8c">430</div>
<svg style="left:124px;top:1229px;" width="18" height="11" viewBox="0 0 18 11"><path d="M1.5 1.2H16.5L9 9.8Z" fill="none" stroke="#1f7fe0" stroke-width="2.2" stroke-linejoin="miter"/></svg>
<div class="a tm" style="left:152px;top:1259.80px;font-size:26.67px;transform:scaleY(1.17);transform-origin:0 22.20px;"><span style="color:#000">            </span><span style="color:#0000a0">&lt;form&gt;</span></div>
<div class="a ts" style="left:52px;top:1258.47px;width:65px;text-align:right;font-size:26px;letter-spacing:1.5px;color:#000">431</div>
<svg style="left:124px;top:1267px;" width="18" height="11" viewBox="0 0 18 11"><path d="M1.5 1.2H16.5L9 9.8Z" fill="none" stroke="#1f7fe0" stroke-width="2.2" stroke-linejoin="miter"/></svg>
<div class="a" style="left:392px;top:1292px;width:322px;height:37px;background:#cdcdf8"></div>
<div class="a tm" style="left:152px;top:1297.80px;font-size:26.67px;transform:scaleY(1.17);transform-origin:0 22.20px;"><span style="color:#000">               </span><span style="color:#0000a0">&lt;orth&gt;</span><span style="color:#000">dresser</span><span style="color:#0000a0">&lt;/orth&gt;</span></div>
<div class="a ts" style="left:52px;top:1296.47px;width:65px;text-align:right;font-size:26px;letter-spacing:1.5px;color:#000">432</div>
<div class="a tm" style="left:152px;top:1335.80px;font-size:26.67px;transform:scaleY(1.17);transform-origin:0 22.20px;"><span style="color:#000">            </span><span style="color:#0000a0">&lt;/form&gt;</span></div>
<div class="a ts" style="left:52px;top:1334.47px;width:65px;text-align:right;font-size:26px;letter-spacing:1.5px;color:#000">433</div>
</div>
<div class="a" style="left:2319px;top:355px;width:22px;height:22px;background:#2cb927;box-sizing:border-box;border:2px solid #1a8a1a"></div>
<div class="a" style="left:2319px;top:403px;width:22px;height:10px;background:#cdcdf8;box-sizing:border-box;border:2px solid #8a8aad"></div>
<div class="a" style="left:2319px;top:413px;width:22px;height:10px;background:#cdcdf8;box-sizing:border-box;border:2px solid #8a8aad"></div>
<div class="a" style="left:2319px;top:427px;width:22px;height:10px;background:#cdcdf8;box-sizing:border-box;border:2px solid #8a8aad"></div>
<div class="a" style="left:2319px;top:449px;width:22px;height:10px;background:#cdcdf8;box-sizing:border-box;border:2px solid #8a8aad"></div>
<div class="a" style="left:2319px;top:473px;width:22px;height:10px;background:#cdcdf8;box-sizing:border-box;border:2px solid #8a8aad"></div>
<div class="a" style="left:2319px;top:497px;width:22px;height:11px;background:#cdcdf8;box-sizing:border-box;border:2px solid #8a8aad"></div>
<div class="a" style="left:2319px;top:508px;width:22px;height:10px;background:#cdcdf8;box-sizing:border-box;border:2px solid #8a8aad"></div>
<div class="a" style="left:2319px;top:518px;width:22px;height:11px;background:#cdcdf8;box-sizing:border-box;border:2px solid #8a8aad"></div>
<div class="a" style="left:2319px;top:529px;width:22px;height:10px;background:#cdcdf8;box-sizing:border-box;border:2px solid #8a8aad"></div>
<div class="a" style="left:2319px;top:539px;width:22px;height:11px;background:#cdcdf8;box-sizing:border-box;border:2px solid #8a8aad"></div>
<div class="a" style="left:2319px;top:550px;width:22px;height:11px;background:#cdcdf8;box-sizing:border-box;border:2px solid #8a8aad"></div>
<div class="a" style="left:2319px;top:561px;width:22px;height:10px;background:#cdcdf8;box-sizing:border-box;border:2px solid #8a8aad"></div>
<div class="a" style="left:2319px;top:571px;width:22px;height:11px;background:#cdcdf8;box-sizing:border-box;border:2px solid #8a8aad"></div>
<div class="a" style="left:2319px;top:582px;width:22px;height:10px;background:#cdcdf8;box-sizing:border-box;border:2px solid #8a8aad"></div>
<div class="a" style="left:2319px;top:599px;width:22px;height:10px;background:#cdcdf8;box-sizing:border-box;border:2px solid #8a8aad"></div>
<div class="a" style="left:2319px;top:609px;width:22px;height:10px;background:#cdcdf8;box-sizing:border-box;border:2px solid #8a8aad"></div>
<div class="a" style="left:2319px;top:623px;width:22px;height:10px;background:#cdcdf8;box-sizing:border-box;border:2px solid #8a8aad"></div>
<div class="a" style="left:2319px;top:633px;width:22px;height:10px;background:#cdcdf8;box-sizing:border-box;border:2px solid #8a8aad"></div>
<div class="a" style="left:2319px;top:649px;width:22px;height:10px;background:#cdcdf8;box-sizing:border-box;border:2px solid #8a8aad"></div>
<div class="a" style="left:2319px;top:683px;width:22px;height:10px;background:#cdcdf8;box-sizing:border-box;border:2px solid #8a8aad"></div>
<div class="a" style="left:2319px;top:693px;width:22px;height:10px;background:#cdcdf8;box-sizing:border-box;border:2px solid #8a8aad"></div>
<div class="a" style="left:2319px;top:709px;width:22px;height:8px;background:#cdcdf8;box-sizing:border-box;border:2px solid #8a8aad"></div>
<div class="a" style="left:2319px;top:717px;width:22px;height:9px;background:#cdcdf8;box-sizing:border-box;border:2px solid #8a8aad"></div>
<div class="a" style="left:2319px;top:726px;width:22px;height:8px;background:#cdcdf8;box-sizing:border-box;border:2px solid #8a8aad"></div>
<div class="a" style="left:2319px;top:734px;width:22px;height:9px;background:#cdcdf8;box-sizing:border-box;border:2px solid #8a8aad"></div>
<div class="a" style="left:2319px;top:751px;width:22px;height:9px;background:#cdcdf8;box-sizing:border-box;border:2px solid #8a8aad"></div>
<div class="a" style="left:2319px;top:765px;width:22px;height:9px;background:#cdcdf8;box-sizing:border-box;border:2px solid #8a8aad"></div>
<div class="a" style="left:2319px;top:777px;width:22px;height:10px;background:#cdcdf8;box-sizing:border-box;border:2px solid #8a8aad"></div>
<div class="a" style="left:2319px;top:787px;width:22px;height:9px;background:#cdcdf8;box-sizing:border-box;border:2px solid #8a8aad"></div>
<div class="a" style="left:2319px;top:807px;width:22px;height:10px;background:#cdcdf8;box-sizing:border-box;border:2px solid #8a8aad"></div>
<div class="a" style="left:2319px;top:855px;width:22px;height:10px;background:#cdcdf8;box-sizing:border-box;border:2px solid #8a8aad"></div>
<div class="a" style="left:2319px;top:871px;width:22px;height:10px;background:#cdcdf8;box-sizing:border-box;border:2px solid #8a8aad"></div>
<div class="a" style="left:2319px;top:893px;width:22px;height:10px;background:#cdcdf8;box-sizing:border-box;border:2px solid #8a8aad"></div>
<div class="a" style="left:2319px;top:903px;width:22px;height:10px;background:#cdcdf8;box-sizing:border-box;border:2px solid #8a8aad"></div>
<div class="a" style="left:2319px;top:919px;width:22px;height:10px;background:#cdcdf8;box-sizing:border-box;border:2px solid #8a8aad"></div>
<div class="a" style="left:2319px;top:929px;width:22px;height:10px;background:#cdcdf8;box-sizing:border-box;border:2px solid #8a8aad"></div>
<div class="a" style="left:2319px;top:943px;width:22px;height:10px;background:#cdcdf8;box-sizing:border-box;border:2px solid #8a8aad"></div>
<div class="a" style="left:2319px;top:967px;width:22px;height:9px;background:#cdcdf8;box-sizing:border-box;border:2px solid #8a8aad"></div>
<div class="a" style="left:2319px;top:976px;width:22px;height:10px;background:#cdcdf8;box-sizing:border-box;border:2px solid #8a8aad"></div>
<div class="a" style="left:2319px;top:986px;width:22px;height:10px;background:#cdcdf8;box-sizing:border-box;border:2px solid #8a8aad"></div>
<div class="a" style="left:2319px;top:996px;width:22px;height:10px;background:#cdcdf8;box-sizing:border-box;border:2px solid #8a8aad"></div>
<div class="a" style="left:2319px;top:1006px;width:22px;height:9px;background:#cdcdf8;box-sizing:border-box;border:2px solid #8a8aad"></div>
<div class="a" style="left:2319px;top:1015px;width:22px;height:10px;background:#cdcdf8;box-sizing:border-box;border:2px solid #8a8aad"></div>
<div class="a" style="left:2319px;top:1025px;width:22px;height:10px;background:#cdcdf8;box-sizing:border-box;border:2px solid #8a8aad"></div>
<div class="a" style="left:2319px;top:1039px;width:22px;height:9px;background:#cdcdf8;box-sizing:border-box;border:2px solid #8a8aad"></div>
<div class="a" style="left:2319px;top:1048px;width:22px;height:9px;background:#cdcdf8;box-sizing:border-box;border:2px solid #8a8aad"></div>
<div class="a" style="left:2319px;top:1057px;width:22px;height:10px;background:#cdcdf8;box-sizing:border-box;border:2px solid #8a8aad"></div>
<div class="a" style="left:2319px;top:1067px;width:22px;height:9px;background:#cdcdf8;box-sizing:border-box;border:2px solid #8a8aad"></div>
<div class="a" style="left:2319px;top:1079px;width:22px;height:10px;background:#cdcdf8;box-sizing:border-box;border:2px solid #8a8aad"></div>
<div class="a" style="left:2319px;top:1105px;width:22px;height:9px;background:#cdcdf8;box-sizing:border-box;border:2px solid #8a8aad"></div>
<div class="a" style="left:2319px;top:1114px;width:22px;height:9px;background:#cdcdf8;box-sizing:border-box;border:2px solid #8a8aad"></div>
<div class="a" style="left:2319px;top:1125px;width:22px;height:9px;background:#cdcdf8;box-sizing:border-box;border:2px solid #8a8aad"></div>
<div class="a" style="left:2319px;top:1134px;width:22px;height:9px;background:#cdcdf8;box-sizing:border-box;border:2px solid #8a8aad"></div>
<div class="a" style="left:2319px;top:1145px;width:22px;height:9px;background:#cdcdf8;box-sizing:border-box;border:2px solid #8a8aad"></div>
<div class="a" style="left:2319px;top:1154px;width:22px;height:9px;background:#cdcdf8;box-sizing:border-box;border:2px solid #8a8aad"></div>
<div class="a" style="left:2319px;top:1169px;width:22px;height:10px;background:#cdcdf8;box-sizing:border-box;border:2px solid #8a8aad"></div>
<div class="a" style="left:2319px;top:1179px;width:22px;height:10px;background:#cdcdf8;box-sizing:border-box;border:2px solid #8a8aad"></div>
<div class="a" style="left:2319px;top:1189px;width:22px;height:11px;background:#cdcdf8;box-sizing:border-box;border:2px solid #8a8aad"></div>
<div class="a" style="left:2319px;top:1200px;width:22px;height:10px;background:#cdcdf8;box-sizing:border-box;border:2px solid #8a8aad"></div>
<div class="a" style="left:2319px;top:1210px;width:22px;height:10px;background:#cdcdf8;box-sizing:border-box;border:2px solid #8a8aad"></div>
<div class="a" style="left:2319px;top:1220px;width:22px;height:10px;background:#cdcdf8;box-sizing:border-box;border:2px solid #8a8aad"></div>
<div class="a" style="left:2319px;top:1233px;width:22px;height:10px;background:#cdcdf8;box-sizing:border-box;border:2px solid #8a8aad"></div>
<div class="a" style="left:2319px;top:1243px;width:22px;height:10px;background:#cdcdf8;box-sizing:border-box;border:2px solid #8a8aad"></div>
<div class="a" style="left:2319px;top:1253px;width:22px;height:9px;background:#cdcdf8;box-sizing:border-box;border:2px solid #8a8aad"></div>
<div class="a" style="left:2319px;top:1267px;width:22px;height:9px;background:#cdcdf8;box-sizing:border-box;border:2px solid #8a8aad"></div>
<div class="a" style="left:2319px;top:1276px;width:22px;height:9px;background:#cdcdf8;box-sizing:border-box;border:2px solid #8a8aad"></div>
<div class="a" style="left:2319px;top:1285px;width:22px;height:9px;background:#cdcdf8;box-sizing:border-box;border:2px solid #8a8aad"></div>
<div class="a" style="left:2319px;top:1294px;width:22px;height:9px;background:#cdcdf8;box-sizing:border-box;border:2px solid #8a8aad"></div>
<div class="a" style="left:2319px;top:1305px;width:22px;height:9px;background:#cdcdf8;box-sizing:border-box;border:2px solid #8a8aad"></div>
<div class="a" style="left:2319px;top:1314px;width:22px;height:9px;background:#cdcdf8;box-sizing:border-box;border:2px solid #8a8aad"></div>
<div class="a" style="left:2319px;top:1323px;width:22px;height:9px;background:#cdcdf8;box-sizing:border-box;border:2px solid #8a8aad"></div>
<div class="a" style="left:2319px;top:1332px;width:22px;height:9px;background:#cdcdf8;box-sizing:border-box;border:2px solid #8a8aad"></div>
<div class="a" style="left:2319px;top:1343px;width:22px;height:9px;background:#cdcdf8;box-sizing:border-box;border:2px solid #8a8aad"></div>
<div class="a" style="left:2319px;top:1352px;width:22px;height:9px;background:#cdcdf8;box-sizing:border-box;border:2px solid #8a8aad"></div>
<div class="a" style="left:2319px;top:1373px;width:22px;height:12px;background:#cdcdf8;box-sizing:border-box;border:2px solid #8a8aad"></div>
<div class="a" style="left:2319px;top:1385px;width:22px;height:12px;background:#cdcdf8;box-sizing:border-box;border:2px solid #8a8aad"></div>
<div class="a" style="left:2319px;top:1419px;width:22px;height:9px;background:#cdcdf8;box-sizing:border-box;border:2px solid #8a8aad"></div>
<div class="a" style="left:2319px;top:1433px;width:22px;height:10px;background:#cdcdf8;box-sizing:border-box;border:2px solid #8a8aad"></div>
<div class="a" style="left:2319px;top:1445px;width:22px;height:10px;background:#cdcdf8;box-sizing:border-box;border:2px solid #8a8aad"></div>
<div class="a" style="left:2319px;top:1463px;width:22px;height:10px;background:#cdcdf8;box-sizing:border-box;border:2px solid #8a8aad"></div>
<div class="a" style="left:2319px;top:1479px;width:22px;height:9px;background:#cdcdf8;box-sizing:border-box;border:2px solid #8a8aad"></div>
<div class="a" style="left:2319px;top:1493px;width:22px;height:9px;background:#cdcdf8;box-sizing:border-box;border:2px solid #8a8aad"></div>
<div class="a" style="left:2319px;top:1507px;width:22px;height:10px;background:#cdcdf8;box-sizing:border-box;border:2px solid #8a8aad"></div>
<div class="a" style="left:2319px;top:1525px;width:22px;height:10px;background:#cdcdf8;box-sizing:border-box;border:2px solid #8a8aad"></div>
<div class="a" style="left:2319px;top:1569px;width:22px;height:10px;background:#cdcdf8;box-sizing:border-box;border:2px solid #8a8aad"></div>
<div class="a" style="left:2319px;top:1591px;width:22px;height:10px;background:#cdcdf8;box-sizing:border-box;border:2px solid #8a8aad"></div>
<div class="a" style="left:2319px;top:1611px;width:22px;height:10px;background:#cdcdf8;box-sizing:border-box;border:2px solid #8a8aad"></div>
<div class="a" style="left:2319px;top:667px;width:22px;height:12px;box-sizing:border-box;border:2px solid #333;background:#cdcdf8"></div>
<svg style="left:2322px;top:1648px;" width="21" height="21" viewBox="0 0 21 21"><path d="M2 2L19 19M19 2L2 19" stroke="#5aa0f0" stroke-width="4"/><path d="M2 2L19 19M19 2L2 19" stroke="#a8ccf5" stroke-width="2"/></svg>
<svg style="left:2319px;top:1683px;" width="23" height="12" viewBox="0 0 23 12"><path d="M11.5 1L22 11H1Z" fill="#9cc6f2" stroke="#2a86ee" stroke-width="2"/></svg>
<svg style="left:2319px;top:1710px;" width="23" height="13" viewBox="0 0 23 13"><path d="M1 1H22L11.5 12Z" fill="#9cc6f2" stroke="#2a86ee" stroke-width="2"/></svg>
<div class="a ts" style="left:566px;top:319.64px;font-size:22.5px;color:#000;font-weight:normal;">TEI</div>
<div class="a ts" style="left:630.6px;top:319.64px;font-size:22.5px;color:#000;font-weight:normal;">text</div>
<div class="a ts" style="left:705px;top:319.64px;font-size:22.5px;color:#000;font-weight:normal;">body</div>
<div class="a ts" style="left:790px;top:319.64px;font-size:22.5px;color:#000;font-weight:normal;">entry</div>
<div class="a ts" style="left:878.7px;top:319.64px;font-size:22.5px;color:#000;font-weight:normal;">form</div>
<div class="a ts" style="left:962.5px;top:319.64px;font-size:22.5px;color:#000;font-weight:normal;">gramGrp</div>
<div class="a ts" style="left:1090.5px;top:319.64px;font-size:22.5px;color:#000;font-weight:normal;">per</div>
<div class="a" style="left:1078px;top:312px;width:60px;height:6px;background:#9fcbf3"></div>
<div class="a" style="left:1234px;top:1741px;width:375px;height:34px;background:#fff;box-sizing:border-box;border:1px solid #c4c4c4;border-radius:6px"></div>
<div class="a" style="left:1234px;top:1741px;width:127px;height:34px;background:#1a82fb;border-radius:6px 0 0 6px"></div>
<div class="a" style="left:1491px;top:1742px;width:1px;height:32px;background:#c4c4c4"></div>
<div class="a ts" style="left:1276px;top:1744.18px;font-size:23px;color:#fff;font-weight:normal;">Text</div>
<div class="a ts" style="left:1406px;top:1744.18px;font-size:23px;color:#000;font-weight:normal;">Grid</div>
<div class="a ts" style="left:1517px;top:1744.18px;font-size:23px;color:#000;font-weight:normal;">Author</div>
<div class="a" style="left:2356px;top:256px;width:766px;height:1490px;box-sizing:border-box;border:2px solid #b9d7ef;background:#ececec"></div>
<div class="a" style="left:2358px;top:258px;width:762px;height:32px;background:linear-gradient(#bebebe,#9b9b9b)"></div>
<div class="a" style="left:2382px;top:262px;width:24px;height:24px;border-radius:50%;background:#d8d8d8"></div>
<div class="a" style="left:2415.5px;top:262px;width:24px;height:24px;border-radius:50%;background:#d8d8d8"></div>
<div class="a" style="left:2449.6px;top:262px;width:24px;height:24px;border-radius:50%;background:#d8d8d8"></div>
<div class="a ts" style="left:2628px;top:261.04px;font-size:23.6px;color:#000;font-weight:normal;">XPath/XQuery Builder</div>
<div class="a ts" style="left:2367.6px;top:300.02px;font-size:26.5px;color:#000;font-weight:normal;">XPath 2.0</div>
<svg style="left:2505px;top:311px;" width="11" height="6" viewBox="0 0 11 6"><path d="M0 0H11L5.5 6Z" fill="#111"/></svg>
<div class="a ts" style="left:2368.3px;top:350.11px;font-size:27.5px;color:#000;font-weight:normal;">Scope:</div>
<div class="a ts" style="left:2508.5px;top:350.11px;font-size:27.5px;color:#000;font-weight:normal;">Current File</div>
<svg style="left:2673px;top:362px;" width="10" height="6" viewBox="0 0 10 6"><path d="M0 0H10L5 6Z" fill="#111"/></svg>
<div class="a ts" style="left:2918.7px;top:350.11px;font-size:27.5px;color:#000;font-weight:normal;letter-spacing:0.85px">TEI-combo.xml</div>
<div class="a" style="left:2358px;top:390px;width:762px;height:1354px;background:#fff"></div>
<div class="a" style="left:2400px;top:390px;width:690px;height:1324px;box-sizing:border-box;border:2px solid #b9d7ef;border-bottom:none"></div>
<div class="a" style="left:2402px;top:392px;width:686px;height:33px;background:#eef7fd"></div>
<div class="a" style="left:3090px;top:390px;width:28px;height:1324px;background:#f8f8f8"></div>
<div class="a" style="left:2402px;top:1714px;width:686px;height:30px;background:#f6f6f6;box-sizing:border-box;border-top:1px solid #e4e4e4"></div>
<div class="a ts" style="left:2379px;top:394.47px;font-size:26px;color:#000;font-weight:normal;">1</div>
<div class="a" style="left:2626px;top:392px;width:178px;height:33px;background:#9ecbfa"></div>
<div class="a tm" style="left:2403px;top:395.80px;font-size:26.67px;font-weight:bold;transform:scaleY(1.12);transform-origin:0 22.20px;"><span style="color:#8b5a2b">//</span><span style="color:#0000dd">form</span><span style="color:#8b5a2b">/</span><span style="color:#0000dd">orth</span> <span style="font-weight:normal;color:#8b5a2b">|</span> <span style="color:#000">//form/pron</span></div>
<div class="a" style="left:2660px;top:1746px;width:302px;height:42px;background:#c6dff5;border-radius:0 0 5px 5px"></div>
<div class="a" style="left:2534px;top:1752px;width:2px;height:32px;background:#b9d7ef"></div>
<div class="a ts" style="left:2415px;top:1756.13px;font-size:24.5px;color:#000;font-weight:normal;">Attributes</div>
<div class="a ts" style="left:2582.5px;top:1756.13px;font-size:24.5px;color:#000;font-weight:normal;">Model</div>
<div class="a ts" style="left:2712.7px;top:1757.30px;font-size:23.2px;color:#000;font-weight:bold;">XPath/XQuery Builder</div>
<div class="a" style="left:114px;top:1800px;width:3006px;height:400px;box-sizing:border-box;border:2px solid #b9d7ef;background:#eeeeee"></div>
<div class="a" style="left:118px;top:1804px;width:2998px;height:348px;box-sizing:border-box;border:2px solid #b9d7ef;background:#eeeeee"></div>
<div class="a" style="left:120px;top:1806px;width:2916px;height:30px;background:#f5f5f5"></div>
<div class="a" style="left:3036px;top:1806px;width:30px;height:30px;background:#fff"></div>
<div class="a ts" style="left:127.3px;top:1806.28px;font-size:24px;color:#000;font-weight:normal;">Description – 167 items</div>
<div class="a" style="left:1715px;top:1808px;width:2px;height:28px;background:#dcdcdc"></div>
<div class="a ts" style="left:1722.6px;top:1806.73px;font-size:23.5px;color:#000;font-weight:normal;">XPath location</div>
<div class="a" style="left:2538.7px;top:1808px;width:2px;height:28px;background:#dcdcdc"></div>
<div class="a ts" style="left:2547px;top:1806.73px;font-size:23.5px;color:#000;font-weight:normal;">Resource</div>
<div class="a" style="left:2838.6px;top:1808px;width:2px;height:28px;background:#dcdcdc"></div>
<div class="a ts" style="left:2846.2px;top:1806.73px;font-size:23.5px;color:#000;font-weight:normal;">System ID</div>
<div class="a" style="left:120px;top:1836px;width:2916px;height:42px;background:#fff"></div>
<div class="a tm" style="left:131px;top:1845.80px;font-size:26.67px;transform:scaleY(1.17);transform-origin:0 22.20px;"><span style="color:#000">competitor</span></div>
<div class="a tm" style="left:1727px;top:1845.80px;font-size:26.67px;transform:scaleY(1.17);transform-origin:0 22.20px;"><span style="color:#000">/TEI[1]/text[1]/body[1]/entry[1]/form[1]/orth[1]</span></div>
<div class="a tm" style="left:2551px;top:1845.80px;font-size:26.67px;transform:scaleY(1.17);transform-origin:0 22.20px;"><span style="color:#000">TEI–combo.xml</span></div>
<div class="a" style="left:2851px;top:1838px;width:185px;height:40px;overflow:hidden">
<div class="a tm" style="left:0px;top:7.80px;font-size:26.67px;transform:scaleY(1.17);transform-origin:0 22.20px;"><span style="color:#000">/Users/ttasovac/Development</span></div>
</div>
<div class="a" style="left:120px;top:1878px;width:2916px;height:40px;background:#ebf2fd"></div>
<div class="a tm" style="left:131px;top:1885.80px;font-size:26.67px;transform:scaleY(1.17);transform-origin:0 22.20px;"><span style="color:#000">k@m"petit@(r)</span></div>
<div class="a tm" style="left:1727px;top:1885.80px;font-size:26.67px;transform:scaleY(1.17);transform-origin:0 22.20px;"><span style="color:#000">/TEI[1]/text[1]/body[1]/entry[1]/form[1]/pron[1]</span></div>
<div class="a tm" style="left:2551px;top:1885.80px;font-size:26.67px;transform:scaleY(1.17);transform-origin:0 22.20px;"><span style="color:#000">TEI–combo.xml</span></div>
<div class="a" style="left:2851px;top:1878px;width:185px;height:40px;overflow:hidden">
<div class="a tm" style="left:0px;top:7.80px;font-size:26.67px;transform:scaleY(1.17);transform-origin:0 22.20px;"><span style="color:#000">/Users/ttasovac/Development</span></div>
</div>
<div class="a" style="left:120px;top:1918px;width:2916px;height:40px;background:#fff"></div>
<div class="a tm" style="left:131px;top:1925.80px;font-size:26.67px;transform:scaleY(1.17);transform-origin:0 22.20px;"><span style="color:#000">disproof</span></div>
<div class="a tm" style="left:1727px;top:1925.80px;font-size:26.67px;transform:scaleY(1.17);transform-origin:0 22.20px;"><span style="color:#000">/TEI[1]/text[1]/body[1]/entry[2]/form[1]/orth[1]</span></div>
<div class="a tm" style="left:2551px;top:1925.80px;font-size:26.67px;transform:scaleY(1.17);transform-origin:0 22.20px;"><span style="color:#000">TEI–combo.xml</span></div>
<div class="a" style="left:2851px;top:1918px;width:185px;height:40px;overflow:hidden">
<div class="a tm" style="left:0px;top:7.80px;font-size:26.67px;transform:scaleY(1.17);transform-origin:0 22.20px;"><span style="color:#000">/Users/ttasovac/Development</span></div>
</div>
<div class="a" style="left:120px;top:1958px;width:2916px;height:40px;background:#ebf2fd"></div>
<div class="a tm" style="left:131px;top:1965.80px;font-size:26.67px;transform:scaleY(1.17);transform-origin:0 22.20px;"><span style="color:#000">dIs"pru:f</span></div>
<div class="a tm" style="left:1727px;top:1965.80px;font-size:26.67px;transform:scaleY(1.17);transform-origin:0 22.20px;"><span style="color:#000">/TEI[1]/text[1]/body[1]/entry[2]/form[1]/pron[1]</span></div>
<div class="a tm" style="left:2551px;top:1965.80px;font-size:26.67px;transform:scaleY(1.17);transform-origin:0 22.20px;"><span style="color:#000">TEI–combo.xml</span></div>
<div class="a" style="left:2851px;top:1958px;width:185px;height:40px;overflow:hidden">
<div class="a tm" style="left:0px;top:7.80px;font-size:26.67px;transform:scaleY(1.17);transform-origin:0 22.20px;"><span style="color:#000">/Users/ttasovac/Development</span></div>
</div>
<div class="a" style="left:120px;top:1998px;width:2916px;height:40px;background:#fff"></div>
<div class="a tm" style="left:131px;top:2005.80px;font-size:26.67px;transform:scaleY(1.17);transform-origin:0 22.20px;"><span style="color:#000">bray</span></div>
<div class="a tm" style="left:1727px;top:2005.80px;font-size:26.67px;transform:scaleY(1.17);transform-origin:0 22.20px;"><span style="color:#000">/TEI[1]/text[1]/body[1]/entry[3]/form[1]/orth[1]</span></div>
<div class="a tm" style="left:2551px;top:2005.80px;font-size:26.67px;transform:scaleY(1.17);transform-origin:0 22.20px;"><span style="color:#000">TEI–combo.xml</span></div>
<div class="a" style="left:2851px;top:1998px;width:185px;height:40px;overflow:hidden">
<div class="a tm" style="left:0px;top:7.80px;font-size:26.67px;transform:scaleY(1.17);transform-origin:0 22.20px;"><span style="color:#000">/Users/ttasovac/Development</span></div>
</div>
<div class="a" style="left:120px;top:2038px;width:2916px;height:40px;background:#ebf2fd"></div>
<div class="a tm" style="left:131px;top:2045.80px;font-size:26.67px;transform:scaleY(1.17);transform-origin:0 22.20px;"><span style="color:#000">breI</span></div>
<div class="a tm" style="left:1727px;top:2045.80px;font-size:26.67px;transform:scaleY(1.17);transform-origin:0 22.20px;"><span style="color:#000">/TEI[1]/text[1]/body[1]/entry[3]/form[1]/pron[1]</span></div>
<div class="a tm" style="left:2551px;top:2045.80px;font-size:26.67px;transform:scaleY(1.17);transform-origin:0 22.20px;"><span style="color:#000">TEI–combo.xml</span></div>
<div class="a" style="left:2851px;top:2038px;width:185px;height:40px;overflow:hidden">
<div class="a tm" style="left:0px;top:7.80px;font-size:26.67px;transform:scaleY(1.17);transform-origin:0 22.20px;"><span style="color:#000">/Users/ttasovac/Development</span></div>
</div>
<div class="a" style="left:120px;top:2078px;width:2916px;height:40px;background:#fff"></div>
<div class="a tm" style="left:131px;top:2085.80px;font-size:26.67px;transform:scaleY(1.17);transform-origin:0 22.20px;"><span style="color:#000">careen</span></div>
<div class="a tm" style="left:1727px;top:2085.80px;font-size:26.67px;transform:scaleY(1.17);transform-origin:0 22.20px;"><span style="color:#000">/TEI[1]/text[1]/body[1]/entry[4]/form[1]/orth[1]</span></div>
<div class="a tm" style="left:2551px;top:2085.80px;font-size:26.67px;transform:scaleY(1.17);transform-origin:0 22.20px;"><span style="color:#000">TEI–combo.xml</span></div>
<div class="a" style="left:2851px;top:2078px;width:185px;height:40px;overflow:hidden">
<div class="a tm" style="left:0px;top:7.80px;font-size:26.67px;transform:scaleY(1.17);transform-origin:0 22.20px;"><span style="color:#000">/Users/ttasovac/Development</span></div>
</div>
<div class="a" style="left:120px;top:2118px;width:2916px;height:1px;background:#e6eefa"></div>
<div class="a" style="left:3036px;top:1836px;width:30px;height:284px;background:#f8f8f8;box-sizing:border-box;border-left:1px solid #e8e8e8"></div>
<div class="a" style="left:3044px;top:1840px;width:16px;height:35px;background:#c2c2c2;border-radius:8px"></div>
<div class="a" style="left:120px;top:2119px;width:2916px;height:31px;background:#f8f8f8;box-sizing:border-box;border-top:2px solid #e2e2e2"></div>
<div class="a" style="left:122px;top:2128px;width:2138px;height:16px;background:#c2c2c2;border-radius:8px"></div>
<div class="a" style="left:3036px;top:2120px;width:30px;height:30px;background:#fff"></div>
<div class="a" style="left:790px;top:2150px;width:336px;height:48px;background:#eeeeee;box-sizing:border-box;border:2px solid #b9d7ef;border-top:none;border-radius:0 0 6px 6px"></div>
<div class="a" style="left:398px;top:2160px;width:2px;height:29px;background:#b9d7ef"></div>
<div class="a" style="left:496px;top:2160px;width:2px;height:29px;background:#b9d7ef"></div>
<div class="a ts" style="left:147px;top:2161.64px;font-size:22.5px;color:#000;font-weight:normal;">Find all – GE.RKMD.xml</div>
<div class="a ts" style="left:417px;top:2161.18px;font-size:23px;color:#000;font-weight:normal;">Errors</div>
<div class="a ts" style="left:514.7px;top:2161.64px;font-size:22.5px;color:#000;font-weight:normal;letter-spacing:0.72px">Find all – TEI-combo.xml</div>
<div class="a ts" style="left:807.8px;top:2160.37px;font-size:23.9px;color:#000;font-weight:bold;">XPath – TEI-combo.xml</div>
<svg style="left:1098px;top:2166px;" width="18" height="18" viewBox="0 0 18 18"><path d="M2 2L16 16M16 2L2 16" stroke="#000" stroke-width="3.4"/></svg>
<div class="a" style="left:112px;top:2206px;width:3010px;height:2px;background:#707070"></div>
<div class="a ts" style="left:122px;top:2215.87px;font-size:26px;color:#000;font-weight:normal;letter-spacing:1.75px">/Users/.../Events/LexMC2017/Data/TEI-combo.xml</div>
<div class="a" style="left:1089px;top:2216px;width:2px;height:34px;background:#d0d0d0"></div>
<div class="a" style="left:2332px;top:2216px;width:2px;height:34px;background:#d0d0d0"></div>
<div class="a" style="left:2568px;top:2216px;width:2px;height:34px;background:#d0d0d0"></div>
<div class="a" style="left:2804px;top:2216px;width:2px;height:34px;background:#d0d0d0"></div>
<div class="a" style="left:3065px;top:2216px;width:2px;height:34px;background:#d0d0d0"></div>
<div class="a" style="left:1111px;top:2218px;width:21px;height:21px;background:#2cb927;box-sizing:border-box;border:1px solid #1b8a17"></div>
<div class="a ts" style="left:1142px;top:2215.87px;font-size:26px;color:#000;font-weight:normal;letter-spacing:0.95px">XPath – successful  ( 0.0s )</div>
<div class="a ts" style="left:2352.5px;top:2215.87px;font-size:26px;color:#000;font-weight:normal;letter-spacing:1.6px">U+000A</div>
<div class="a ts" style="left:2589.6px;top:2215.87px;font-size:26px;color:#000;font-weight:normal;letter-spacing:1.3px">316 : 35</div>
<svg width="0" height="0" style="position:absolute"><defs><linearGradient id="fg" x1="0" y1="0" x2="0" y2="1"><stop offset="0" stop-color="#fff2c8"/><stop offset="0.5" stop-color="#fde2a0"/><stop offset="1" stop-color="#f2c040"/></linearGradient></defs></svg>
<svg style="left:146px;top:128px;" width="32" height="40" viewBox="0 0 32 40"><path d="M1 1H21.5L31 10.5V39H1Z" fill="#fff" stroke="#1a6fc0" stroke-width="2"/><path d="M21.5 1V10.5H31Z" fill="#b8d4f0" stroke="#1a6fc0" stroke-width="2" stroke-linejoin="miter"/><path d="M1 25V39H31V25" fill="none" stroke="#134a86" stroke-width="2"/></svg>
<svg style="left:202px;top:129px;" width="40" height="35" viewBox="0 0 40 35"><path d="M1 9.8 V2 Q1 1 3 1 H12.0 L15.5 5 H38 Q39 5 39 7 V10.5" fill="#fff" stroke="#c0601a" stroke-width="2"/><rect x="1" y="9.8" width="38" height="24.2" fill="url(#fg)" stroke="#e8ae1e" stroke-width="2"/><rect x="0" y="32.5" width="40" height="2.5" fill="#c0601a"/></svg>
<svg style="left:261px;top:129px;" width="45" height="38" viewBox="0 0 45 38"><path d="M1 9.8 V2 Q1 1 3 1 H12.0 L15.5 5 H38 Q39 5 39 7 V10.5" fill="#fff" stroke="#c0601a" stroke-width="2"/><rect x="1" y="9.8" width="38" height="24.2" fill="url(#fg)" stroke="#e8ae1e" stroke-width="2"/><rect x="0" y="32.5" width="40" height="2.5" fill="#c0601a"/><circle cx="34.3" cy="28.8" r="11.0" fill="#fff"/><circle cx="34.3" cy="28.8" r="9.5" fill="#1a62b0"/><line x1="29.5" y1="19.3" x2="29.5" y2="38.3" stroke="#fff" stroke-width="1.3"/><line x1="24.799999999999997" y1="24.1" x2="43.8" y2="24.1" stroke="#fff" stroke-width="1.3"/><line x1="34.3" y1="19.3" x2="34.3" y2="38.3" stroke="#fff" stroke-width="1.3"/><line x1="24.799999999999997" y1="28.8" x2="43.8" y2="28.8" stroke="#fff" stroke-width="1.3"/><line x1="39.0" y1="19.3" x2="39.0" y2="38.3" stroke="#fff" stroke-width="1.3"/><line x1="24.799999999999997" y1="33.5" x2="43.8" y2="33.5" stroke="#fff" stroke-width="1.3"/><circle cx="34.3" cy="28.8" r="9.5" fill="none" stroke="#134a86" stroke-width="1"/></svg>
<svg style="left:324px;top:130px;" width="36" height="36" viewBox="0 0 36 36"><path d="M3 0H28L36 8V33Q36 36 33 36H3Q0 36 0 33V3Q0 0 3 0Z" fill="#8e94c6"/><rect x="6" y="2" width="22" height="12" fill="#d6d6d8"/><rect x="18" y="4" width="6" height="8" fill="#8e94c6"/><rect x="4" y="20" width="28" height="14" fill="#dadada"/><path d="M7 24H29M7 27.5H29M7 31H29" stroke="#9a9aa8" stroke-width="0.9"/></svg>
<svg style="left:386px;top:128px;" width="32" height="40" viewBox="0 0 32 40"><path d="M1 1H21L31 11V39H1Z" fill="#fff" stroke="#7a7a7a" stroke-width="2"/><path d="M21 1V11H31Z" fill="#b0b0b0" stroke="#7a7a7a" stroke-width="2"/><circle cx="16.5" cy="24.3" r="10.9" fill="#fff"/><circle cx="16.5" cy="24.3" r="9.4" fill="#1a62b0"/><line x1="11.8" y1="14.9" x2="11.8" y2="33.7" stroke="#fff" stroke-width="1.3"/><line x1="7.1" y1="19.6" x2="25.9" y2="19.6" stroke="#fff" stroke-width="1.3"/><line x1="16.5" y1="14.9" x2="16.5" y2="33.7" stroke="#fff" stroke-width="1.3"/><line x1="7.1" y1="24.3" x2="25.9" y2="24.3" stroke="#fff" stroke-width="1.3"/><line x1="21.2" y1="14.9" x2="21.2" y2="33.7" stroke="#fff" stroke-width="1.3"/><line x1="7.1" y1="29.0" x2="25.9" y2="29.0" stroke="#fff" stroke-width="1.3"/><circle cx="16.5" cy="24.3" r="9.4" fill="none" stroke="#134a86" stroke-width="1"/></svg>
<svg style="left:444px;top:130px;" width="36" height="38" viewBox="0 0 36 38"><path d="M27.45 28.45A14.5 14.5 0 1 1 22.2 4.6" fill="none" stroke="#118a11" stroke-width="5"/><path d="M34.2 1.1V14H21.3Z" fill="#118a11"/></svg>
<div class="a ts" style="left:525px;top:124.5px;font-size:19.5px;font-weight:bold;color:#808080;letter-spacing:0.3px">ABC</div>
<svg style="left:531px;top:143px;" width="34" height="26" viewBox="0 0 34 26"><path d="M4 12L14.5 22.4L30 2.2" fill="none" stroke="#0b6bbf" stroke-width="4.4"/></svg>
<svg style="left:612px;top:126px;" width="44" height="44" viewBox="0 0 44 44"><circle cx="16.2" cy="16" r="11.7" fill="none" stroke="#0d6cbf" stroke-width="4.6"/><path d="M24.5 24.5L39 39" stroke="#0d6cbf" stroke-width="6"/></svg>
<svg style="left:678px;top:128px;" width="36" height="40" viewBox="0 0 36 40"><path d="M1 1H16L19 4V32H1Z" fill="#fff" stroke="#808080" stroke-width="2"/><path d="M5 5H20L27 12V34H5Z" fill="#fff" stroke="#808080" stroke-width="2"/><path d="M20 5V12H27Z" fill="#a8a8a8"/><circle cx="20.6" cy="26.3" r="6.8" fill="#fff" stroke="#1a5fa8" stroke-width="3.4"/><path d="M25 31L33 38.5" stroke="#1a5fa8" stroke-width="4"/></svg>
<svg style="left:734px;top:130px;" width="42" height="40" viewBox="0 0 42 40"><path d="M1 8.96 V2 Q1 1 3 1 H10.2 L13.7 5 H32 Q33 5 33 7 V9.6" fill="#fff" stroke="#c0601a" stroke-width="2"/><rect x="1" y="8.96" width="32" height="22.04" fill="url(#fg)" stroke="#e8ae1e" stroke-width="2"/><rect x="0" y="29.5" width="34" height="2.5" fill="#c0601a"/><path d="M24 15.5H35L40.5 21V37.5H24Z" fill="#fff" stroke="#134a86" stroke-width="2.2"/><path d="M27 24H37M27 28H37M27 32H37" stroke="#555" stroke-width="2"/></svg>
<svg style="left:818px;top:128px;" width="44" height="44" viewBox="0 0 44 44"><path d="M16 3H23V18.5H40V25.5H16Z" fill="#0b6bbf"/><path d="M19 22L39 3" stroke="#0b6bbf" stroke-width="7.5"/><path d="M9 25V40M2.5 28.5L15.5 36.5M15.5 28.5L2.5 36.5" stroke="#e0301a" stroke-width="2.6"/></svg>
<svg style="left:884px;top:134px;" width="33" height="27" viewBox="0 0 33 27"><path d="M0.5 12.8L13.5 0H20L10.5 9.6H32V15.9H10.5L20 25.5H13.5Z" fill="#0b6bbf"/></svg>
<svg style="left:943px;top:134px;" width="33" height="27" viewBox="0 0 33 27"><path d="M32.5 12.8L19.5 0H13L22.5 9.6H1V15.9H22.5L13 25.5H19.5Z" fill="#9da5cf"/></svg>
<svg style="left:2824px;top:136px;" width="31" height="27" viewBox="0 0 31 27"><rect x="1" y="1" width="29" height="25" fill="#fff" stroke="#808080" stroke-width="2"/><rect x="0" y="0" width="31" height="4" fill="#0b6bbf"/><path d="M10.5 4V26" stroke="#b0b0b0" stroke-width="1.5"/><path d="M3 9.5H9M3 19H9" stroke="#7ab8f0" stroke-width="1.6"/><rect x="14" y="8" width="12" height="7" fill="#fff" stroke="#a0a0a0" stroke-width="1.5"/><path d="M14 18H27M14 22H27" stroke="#7ab8f0" stroke-width="1.6"/></svg>
<svg style="left:2906px;top:136px;" width="31" height="27" viewBox="0 0 31 27"><rect x="1" y="1" width="29" height="25" fill="#fff" stroke="#808080" stroke-width="2"/><rect x="0" y="0" width="31" height="4" fill="#0b6bbf"/><path d="M10.5 4V26" stroke="#b0b0b0" stroke-width="1.5"/><path d="M14 18H27M14 22H27" stroke="#7ab8f0" stroke-width="1.6"/></svg>
<svg style="left:2915px;top:127px;" width="24" height="22" viewBox="0 0 24 22"><path d="M5 3L8 8M13 1V6M2 12H6M20 12H23M4 19L7 16M21 19L18 16M20 5L17 8" stroke="#666" stroke-width="1.2"/><ellipse cx="13.5" cy="13" rx="7" ry="7.5" fill="#e44a1e" transform="rotate(-35 13.5 13)"/><circle cx="9" cy="8.5" r="3.4" fill="#111"/><path d="M8 8L18 18" stroke="#333" stroke-width="1"/></svg>
<div class="a" style="left:2897px;top:147px;width:41px;height:18px;background:#fff8c8;box-sizing:border-box;border:1.5px solid #c8883a;border-radius:5px"></div>
<div class="a ts" style="left:2901px;top:147px;font-size:14.5px;font-weight:bold;color:#000;letter-spacing:-0.1px">XSLT</div>
<svg style="left:2984px;top:136px;" width="31" height="27" viewBox="0 0 31 27"><rect x="1" y="1" width="29" height="25" fill="#fff" stroke="#808080" stroke-width="2"/><rect x="0" y="0" width="31" height="4" fill="#0b6bbf"/><path d="M10.5 4V26" stroke="#b0b0b0" stroke-width="1.5"/><path d="M14 18H27M14 22H27" stroke="#7ab8f0" stroke-width="1.6"/></svg>
<svg style="left:2994px;top:127px;" width="24" height="22" viewBox="0 0 24 22"><path d="M5 3L8 8M13 1V6M2 12H6M20 12H23M4 19L7 16M21 19L18 16M20 5L17 8" stroke="#666" stroke-width="1.2"/><ellipse cx="13.5" cy="13" rx="7" ry="7.5" fill="#e44a1e" transform="rotate(-35 13.5 13)"/><circle cx="9" cy="8.5" r="3.4" fill="#111"/><path d="M8 8L18 18" stroke="#333" stroke-width="1"/></svg>
<div class="a" style="left:2978px;top:147px;width:26px;height:18px;background:#fff8c8;box-sizing:border-box;border:1.5px solid #c8883a;border-radius:5px"></div>
<div class="a ts" style="left:2981px;top:147px;font-size:14.5px;font-weight:bold;color:#000">XQ</div>
<svg style="left:3062px;top:136px;" width="31" height="27" viewBox="0 0 31 27"><rect x="1" y="1" width="29" height="25" fill="#fff" stroke="#808080" stroke-width="2"/><rect x="0" y="0" width="31" height="4" fill="#0b6bbf"/><path d="M10.5 4V26" stroke="#b0b0b0" stroke-width="1.5"/><path d="M3 9.5H9M3 19H9" stroke="#7ab8f0" stroke-width="1.6"/></svg>
<svg style="left:3073px;top:143px;" width="24" height="24" viewBox="0 0 24 24"><rect x="13" y="3" width="9" height="16" rx="4" fill="#bcdcf8" stroke="#1a6fc0" stroke-width="2"/><ellipse cx="17.5" cy="4" rx="4.5" ry="2.5" fill="#e8f4fd" stroke="#1a6fc0" stroke-width="1.6"/><rect x="2" y="9" width="9" height="14" rx="4" fill="#bcdcf8" stroke="#1a6fc0" stroke-width="2"/><ellipse cx="6.5" cy="10" rx="4.5" ry="2.5" fill="#e8f4fd" stroke="#1a6fc0" stroke-width="1.6"/></svg>
<svg style="left:311px;top:209px;" width="20" height="24" viewBox="0 0 20 24"><path d="M2 2H11.5L18 8.5V22H2Z" fill="#fff" stroke="#808285" stroke-width="2"/><path d="M11.5 2V8H18" fill="none" stroke="#808285" stroke-width="2"/><path d="M5 10H9M5 14H14.5M5 18H14.5" stroke="#808285" stroke-width="2"/></svg>
<svg style="left:338px;top:218px;" width="10" height="6" viewBox="0 0 10 6"><path d="M0 0H10L5 6Z" fill="#000"/></svg>
<svg style="left:932px;top:209px;" width="34" height="24" viewBox="0 0 34 24"><path d="M2 23L12 1H15.5L5.5 23ZM9 23L19 1H22.5L12.5 23Z" fill="#808080"/><path d="M25 9.5L27 14.5L32 14.8L28.2 18L29.5 23L25 20.2L20.5 23L21.8 18L18 14.8L23 14.5Z" fill="#808080"/></svg>
<svg style="left:989px;top:206px;" width="26" height="26" viewBox="0 0 26 26"><circle cx="13" cy="13" r="4.5" fill="#fff"/><path d="M24.72 10.43 L24.72 15.57 L21.96 15.72 L21.25 17.41 L23.11 19.47 L19.47 23.11 L17.41 21.25 L15.72 21.96 L15.57 24.72 L10.43 24.72 L10.28 21.96 L8.59 21.25 L6.53 23.11 L2.89 19.47 L4.75 17.41 L4.04 15.72 L1.28 15.57 L1.28 10.43 L4.04 10.28 L4.75 8.59 L2.89 6.53 L6.53 2.89 L8.59 4.75 L10.28 4.04 L10.43 1.28 L15.57 1.28 L15.72 4.04 L17.41 4.75 L19.47 2.89 L23.11 6.53 L21.25 8.59 L21.96 10.28Z M17.00 13.00 A4 4 0 1 0 9.00 13.00 A4 4 0 1 0 17.00 13.00Z" fill="#0b70bd" fill-rule="evenodd"/></svg>
<svg style="left:1012px;top:228px;" width="10" height="6" viewBox="0 0 10 6"><path d="M0 0H10L5 6Z" fill="#000"/></svg>
<svg style="left:1069px;top:201px;" width="40" height="42" viewBox="0 0 40 42"><path d="M2 2H23L33 12V40H2Z" fill="#fff" stroke="#7a7a7a" stroke-width="2"/><path d="M23 2V11H32Z" fill="#d0d0d0" stroke="#7a7a7a" stroke-width="2"/><path d="M7 24L16 34.5L37 9" fill="none" stroke="#e5391a" stroke-width="4.8" stroke-linecap="round"/></svg>
<svg style="left:1129px;top:218px;" width="11" height="7" viewBox="0 0 11 7"><path d="M0 0H11V1.5L5.5 7L0 1.5Z" fill="#000"/></svg>
<svg style="left:1183px;top:201px;" width="42" height="42" viewBox="0 0 42 42"><circle cx="21" cy="21" r="19.5" fill="#fff" stroke="#808080" stroke-width="2"/><path d="M13 8.3V34L34 21.2Z" fill="#e5391a"/></svg>
<svg style="left:1244px;top:201px;" width="44" height="42" viewBox="0 0 44 42"><path d="M5 33L21 17" stroke="#808080" stroke-width="7" stroke-linecap="round"/><path d="M24 3A9 9 0 1 0 33 13L28 12L25 9Z" fill="#808080"/><circle cx="24" cy="12" r="9" fill="#808080"/><path d="M22 4L26 0H34V5L29 9Z" fill="#ececec"/><path d="M24 23V41L41 32Z" fill="#e5391a"/></svg>
<svg style="left:1301px;top:201px;" width="48" height="44" viewBox="0 0 48 44"><circle cx="21" cy="21" r="19.5" fill="#fff" stroke="#808080" stroke-width="2"/><path d="M13 8V34L34 21Z" fill="#0b6bbf"/><path d="M29 30H45M31 24L35 28M43 24L39 28M31 40L35 36M43 40L39 36" stroke="#555" stroke-width="1.2"/><ellipse cx="37" cy="34" rx="5.5" ry="7" fill="#e5391a"/><circle cx="37" cy="26" r="3" fill="#777"/><path d="M37 27V41" stroke="#fff" stroke-width="0.8"/></svg>
<svg style="left:1395px;top:207px;" width="32" height="30" viewBox="0 0 32 30"><path d="M1 0H21V4H1ZM11 6H31V10H11ZM11 12H31V16H11ZM11 18H31V22H11ZM1 24H21V28H1Z" fill="#0b6bbf"/></svg>
<svg style="left:1478px;top:202px;" width="38" height="42" viewBox="0 0 38 42"><path d="M4.2 1.2H24.9L35.9 11.1V40.7H4.2Z" fill="#fff"/><path d="M4.2 24.9V1.2H24.9L35.9 11.1V40.7H12" fill="none" stroke="#808080" stroke-width="2.2"/><path d="M24.9 1.2V11.1H35.9Z" fill="#b8b8b8"/><rect x="12.2" y="17.2" width="5.7" height="5.7" fill="#0b6bbf"/><rect x="24" y="17.2" width="4.2" height="5" fill="#0b6bbf"/><rect x="24" y="23.2" width="4.2" height="4.5" fill="#0b6bbf"/><rect x="24" y="29.2" width="4.2" height="4.5" fill="#0b6bbf"/><path d="M17.9 19.9H24M20.9 20V31.5H24M20.9 25.5H24" fill="none" stroke="#999" stroke-width="1.6"/><path d="M4 40Q1 33 9 29.5" fill="none" stroke="#0b6bbf" stroke-width="3.6"/><path d="M6.2 28.8L12.2 26.5L11.5 34Z" fill="#0b6bbf"/></svg>
<svg style="left:1537px;top:201px;" width="40" height="42" viewBox="0 0 40 42"><rect x="1.1" y="1.2" width="5.9" height="5.4" fill="#0b6bbf"/><rect x="13" y="1.2" width="3.9" height="4.2" fill="#0b6bbf"/><rect x="13" y="7.4" width="3.9" height="3.3" fill="#0b6bbf"/><rect x="13" y="13.3" width="3.9" height="3.5" fill="#0b6bbf"/><path d="M7 3.6H13M9.8 4V15H13M9.8 9H13" fill="none" stroke="#999" stroke-width="1.4"/><path d="M17.5 27.5 L21.0 31 L7.4 40.9Z" fill="#888"/><path d="M27.3 9.4 L38.3 20.4 L32.0 21.5 L25.5 29.5 L26.5 34.2 L13.5 22.0 L19.0 21.5 L26.5 14.0Z" fill="#e5391a"/></svg>
<svg style="left:1599px;top:201px;" width="40" height="42" viewBox="0 0 40 42"><rect x="1" y="1.2" width="16.1" height="3.4" fill="#0b6bbf"/><rect x="1" y="7.4" width="8" height="9.4" fill="#6a96d4"/><path d="M11.2 8.9H17.1M11.2 12.2H17.1M11.2 15.9H17.1" stroke="#808080" stroke-width="1.7"/><path d="M15.7 27.5 L19.2 31 L5.6 40.9Z" fill="#888"/><path d="M25.5 9.4 L36.5 20.4 L30.2 21.5 L23.7 29.5 L24.7 34.2 L11.7 22.0 L17.2 21.5 L24.7 14.0Z" fill="#118a11"/></svg>
<svg style="left:1680px;top:204px;" width="50" height="36" viewBox="0 0 50 36"><path d="M2 6H36V32H21L19 33.6L17 32H2Z" fill="#8a8cc0"/><rect x="4.5" y="2.5" width="29" height="27.5" fill="#d9d9d9" stroke="#b8b8b8" stroke-width="1.6"/><path d="M19 2.5V30" stroke="#bdbdbd" stroke-width="2"/><path d="M8.3 8.7H16M8.3 12.8H16M8.3 16.8H16M8.3 20.8H16" stroke="#b0b0b0" stroke-width="1.8"/><path d="M22 25.5L24.5 18.6L43.2 2L47.2 6.4L28.5 23Z" fill="#8a8cc0"/><path d="M38.4 4.9L43.8 10.8" stroke="#eeeeee" stroke-width="1.6"/><path d="M23.5 21.5L26 24" stroke="#d9d9d9" stroke-width="1.2"/></svg>
<svg style="left:1770px;top:203px;" width="40" height="38" viewBox="0 0 40 38"><path d="M10 13L23.2 26.9L9.5 28.6Z" fill="#8a8cc0"/><path d="M10.5 27.5L3.6 33.6" stroke="#8a8cc0" stroke-width="4"/><path d="M14.4 8.6L29.7 7.2L28 22.1Z" fill="#e6b090"/><path d="M28 8.5L34.7 2.2" stroke="#e6b090" stroke-width="4"/></svg>
<svg style="left:139px;top:311px;" width="34" height="26" viewBox="0 0 34 26"><circle cx="10.5" cy="10.5" r="8.5" fill="none" stroke="#555" stroke-width="2.2"/><path d="M16.5 16.5L23.5 23.5" stroke="#555" stroke-width="2.4"/><path d="M24 9L27.5 12.5L31 9" fill="none" stroke="#555" stroke-width="2"/></svg>
<svg style="left:455px;top:308px;" width="26" height="26" viewBox="0 0 26 26"><circle cx="13" cy="13" r="4.5" fill="#fff"/><path d="M24.72 10.43 L24.72 15.57 L21.96 15.72 L21.25 17.41 L23.11 19.47 L19.47 23.11 L17.41 21.25 L15.72 21.96 L15.57 24.72 L10.43 24.72 L10.28 21.96 L8.59 21.25 L6.53 23.11 L2.89 19.47 L4.75 17.41 L4.04 15.72 L1.28 15.57 L1.28 10.43 L4.04 10.28 L4.75 8.59 L2.89 6.53 L6.53 2.89 L8.59 4.75 L10.28 4.04 L10.43 1.28 L15.57 1.28 L15.72 4.04 L17.41 4.75 L19.47 2.89 L23.11 6.53 L21.25 8.59 L21.96 10.28Z M17.00 13.00 A4 4 0 1 0 9.00 13.00 A4 4 0 1 0 17.00 13.00Z" fill="#0b70bd" fill-rule="evenodd"/></svg>
<svg style="left:478px;top:330px;" width="10" height="6" viewBox="0 0 10 6"><path d="M0 0H10L5 6Z" fill="#000"/></svg>
<svg style="left:2248px;top:268px;" width="14" height="21" viewBox="0 0 14 21"><path d="M12 2V19L2 10.5Z" fill="none" stroke="#111" stroke-width="2.6" stroke-linejoin="miter"/></svg>
<svg style="left:2284px;top:268px;" width="14" height="21" viewBox="0 0 14 21"><path d="M2 2V19L12 10.5Z" fill="none" stroke="#111" stroke-width="2.6" stroke-linejoin="miter"/></svg>
<svg style="left:2312px;top:268px;" width="19" height="21" viewBox="0 0 19 21"><rect x="1.3" y="1.3" width="16.4" height="18.4" fill="none" stroke="#111" stroke-width="2.6"/><path d="M5 6.5H14M5 10.5H14M5 14.5H14" stroke="#111" stroke-width="2.4"/></svg>
<svg style="left:2533px;top:298px;" width="34" height="34" viewBox="0 0 34 34"><circle cx="16.5" cy="16.5" r="15.3" fill="#fff" stroke="#808080" stroke-width="2"/><path d="M11 7V26L27 16.5Z" fill="#e5391a"/></svg>
<svg style="left:2933px;top:301px;" width="28" height="27" viewBox="0 0 28 27"><path d="M14 2L17.2 10.5H26L19 16L21.7 25L14 19.8L6.3 25L9 16L2 10.5H10.8Z" fill="none" stroke="#0b6bbf" stroke-width="2.4" stroke-linejoin="miter"/></svg>
<svg style="left:2982px;top:311px;" width="12" height="6" viewBox="0 0 12 6"><path d="M0 0H12L6 6Z" fill="#000"/></svg>
<svg style="left:3006px;top:300px;" width="40" height="28" viewBox="0 0 40 28"><circle cx="12.5" cy="12.5" r="10.5" fill="#fff" stroke="#0b6bbf" stroke-width="3"/><path d="M12 6V13H17" fill="none" stroke="#555" stroke-width="2"/><path d="M26 20H37L31.5 26Z" fill="#000"/></svg>
<div class="a" style="left:3057px;top:298px;width:2px;height:2px;background:#999"></div>
<div class="a" style="left:3057px;top:302px;width:2px;height:2px;background:#999"></div>
<div class="a" style="left:3057px;top:306px;width:2px;height:2px;background:#999"></div>
<div class="a" style="left:3057px;top:310px;width:2px;height:2px;background:#999"></div>
<div class="a" style="left:3057px;top:314px;width:2px;height:2px;background:#999"></div>
<div class="a" style="left:3057px;top:318px;width:2px;height:2px;background:#999"></div>
<div class="a" style="left:3057px;top:322px;width:2px;height:2px;background:#999"></div>
<div class="a" style="left:3057px;top:326px;width:2px;height:2px;background:#999"></div>
<div class="a" style="left:3057px;top:330px;width:2px;height:2px;background:#999"></div>
<svg style="left:3072px;top:300px;" width="26" height="26" viewBox="0 0 26 26"><circle cx="13" cy="13" r="4.5" fill="#fff"/><path d="M24.72 10.43 L24.72 15.57 L21.96 15.72 L21.25 17.41 L23.11 19.47 L19.47 23.11 L17.41 21.25 L15.72 21.96 L15.57 24.72 L10.43 24.72 L10.28 21.96 L8.59 21.25 L6.53 23.11 L2.89 19.47 L4.75 17.41 L4.04 15.72 L1.28 15.57 L1.28 10.43 L4.04 10.28 L4.75 8.59 L2.89 6.53 L6.53 2.89 L8.59 4.75 L10.28 4.04 L10.43 1.28 L15.57 1.28 L15.72 4.04 L17.41 4.75 L19.47 2.89 L23.11 6.53 L21.25 8.59 L21.96 10.28Z M17.00 13.00 A4 4 0 1 0 9.00 13.00 A4 4 0 1 0 17.00 13.00Z" fill="#0b70bd" fill-rule="evenodd"/></svg>
<svg style="left:3095px;top:322px;" width="10" height="6" viewBox="0 0 10 6"><path d="M0 0H10L5 6Z" fill="#000"/></svg>
<svg style="left:2474px;top:355px;" width="19" height="21" viewBox="0 0 19 21"><path d="M2 2H11L17 8V19H2Z" fill="#fff" stroke="#808285" stroke-width="1.8"/><path d="M11 2V8H17" fill="none" stroke="#808285" stroke-width="1.8"/><path d="M5 10H9M5 13.5H14M5 17H14" stroke="#808285" stroke-width="1.8"/></svg>
<div class="a" style="left:2377px;top:1747px;font-family:'Liberation Serif',serif;font-style:italic;font-weight:bold;font-size:40px;color:#e5391a;line-height:40px">a</div>
<svg style="left:2546px;top:1753px;" width="28" height="34" viewBox="0 0 28 34"><path d="M13 5V33M5 13H21M13 24.5H21" stroke="#888" stroke-width="1.8"/><circle cx="13" cy="5" r="3.9" fill="#e5391a"/><circle cx="4.5" cy="13" r="3.9" fill="#e5391a"/><circle cx="21.5" cy="13" r="3.9" fill="#e5391a"/><circle cx="21.5" cy="24.5" r="3.9" fill="#e5391a"/></svg>
<svg style="left:2672px;top:1758px;" width="32" height="24" viewBox="0 0 32 24"><path d="M1 23L11 1H14.5L4.5 23ZM8 23L18 1H21.5L11.5 23Z" fill="#0b6bbf"/><path d="M24.5 9.5L26.6 14.6L31.6 14.8L27.7 18L29 23L24.5 20.2L20 23L21.3 18L17.4 14.8L22.4 14.6Z" fill="#0b6bbf"/></svg>
<svg style="left:3073px;top:1817px;" width="24" height="24" viewBox="0 0 24 24"><circle cx="12" cy="12" r="4.1" fill="#fff"/><path d="M22.74 9.64 L22.74 14.36 L20.21 14.49 L19.57 16.04 L21.26 17.93 L17.93 21.26 L16.04 19.57 L14.49 20.21 L14.36 22.74 L9.64 22.74 L9.51 20.21 L7.96 19.57 L6.07 21.26 L2.74 17.93 L4.43 16.04 L3.79 14.49 L1.26 14.36 L1.26 9.64 L3.79 9.51 L4.43 7.96 L2.74 6.07 L6.07 2.74 L7.96 4.43 L9.51 3.79 L9.64 1.26 L14.36 1.26 L14.49 3.79 L16.04 4.43 L17.93 2.74 L21.26 6.07 L19.57 7.96 L20.21 9.51Z M15.60 12.00 A3.6 3.6 0 1 0 8.40 12.00 A3.6 3.6 0 1 0 15.60 12.00Z" fill="#0b70bd" fill-rule="evenodd"/></svg>
<svg style="left:3094px;top:1837px;" width="10" height="6" viewBox="0 0 10 6"><path d="M0 0H10L5 6Z" fill="#000"/></svg>
<div class="a" style="left:3068px;top:1852px;width:42px;height:42px;background:linear-gradient(#f4f4f4,#e0e0e0);box-sizing:border-box;border:1px solid #c8c8c8"></div>
<svg style="left:3074px;top:1857px;" width="32" height="32" viewBox="0 0 32 32"><path d="M8 22L22 6Q25 3 28 6Q31 9 28 12L14 26Z" fill="#6aa8f0" stroke="#1a6fc0" stroke-width="1.6"/><path d="M8 22L5 28L14 26Z" fill="#f0a040" stroke="#c06018" stroke-width="1.4"/><rect x="1" y="27" width="31" height="5" fill="#f4b820"/></svg>
<svg style="left:3080px;top:1929px;" width="18" height="18" viewBox="0 0 18 18"><path d="M2 2L16 16M16 2L2 16" stroke="#0b6bbf" stroke-width="4"/></svg>
<svg style="left:3077px;top:1973px;" width="26" height="22" viewBox="0 0 26 22"><path d="M2 2L14 14M14 2L2 14" stroke="#3a90e8" stroke-width="3.6"/><path d="M10 7L23 20M23 7L10 20" stroke="#0b6bbf" stroke-width="4"/></svg>
<svg style="left:3080px;top:2167px;" width="18" height="19" viewBox="0 0 18 19"><rect x="1.2" y="1.2" width="15.6" height="16.6" fill="none" stroke="#111" stroke-width="2.4"/><path d="M4.5 6H13.5M4.5 9.5H13.5M4.5 13H13.5" stroke="#111" stroke-width="2"/></svg>
<svg style="left:3088px;top:2217px;" width="28" height="26" viewBox="0 0 28 26"><path d="M3 1H25Q27 1 27 3V16Q27 18 25 18H11L6 24V18H3Q1 18 1 16V3Q1 1 3 1Z" fill="#fff" stroke="#777" stroke-width="1.8"/><path d="M5 6H23M5 10H23M5 14H13" stroke="#1a7ad8" stroke-width="2.2"/></svg>
<svg style="left:623px;top:68px;" width="34" height="34" viewBox="0 0 34 34"><path d="M9 5H25L31 11V33H9Z" fill="#fff" stroke="#ccc" stroke-width="1"/><rect x="2" y="3" width="22" height="10" fill="#e5391a"/><text x="4" y="11.5" font-family="Liberation Sans" font-weight="bold" font-size="8" fill="#fff">XML</text><path d="M15 19L11 23L15 27M25 19L29 23L25 27" fill="none" stroke="#e5391a" stroke-width="2"/><circle cx="20" cy="23" r="3" fill="none" stroke="#e5391a" stroke-width="2"/></svg>
</body></html>
